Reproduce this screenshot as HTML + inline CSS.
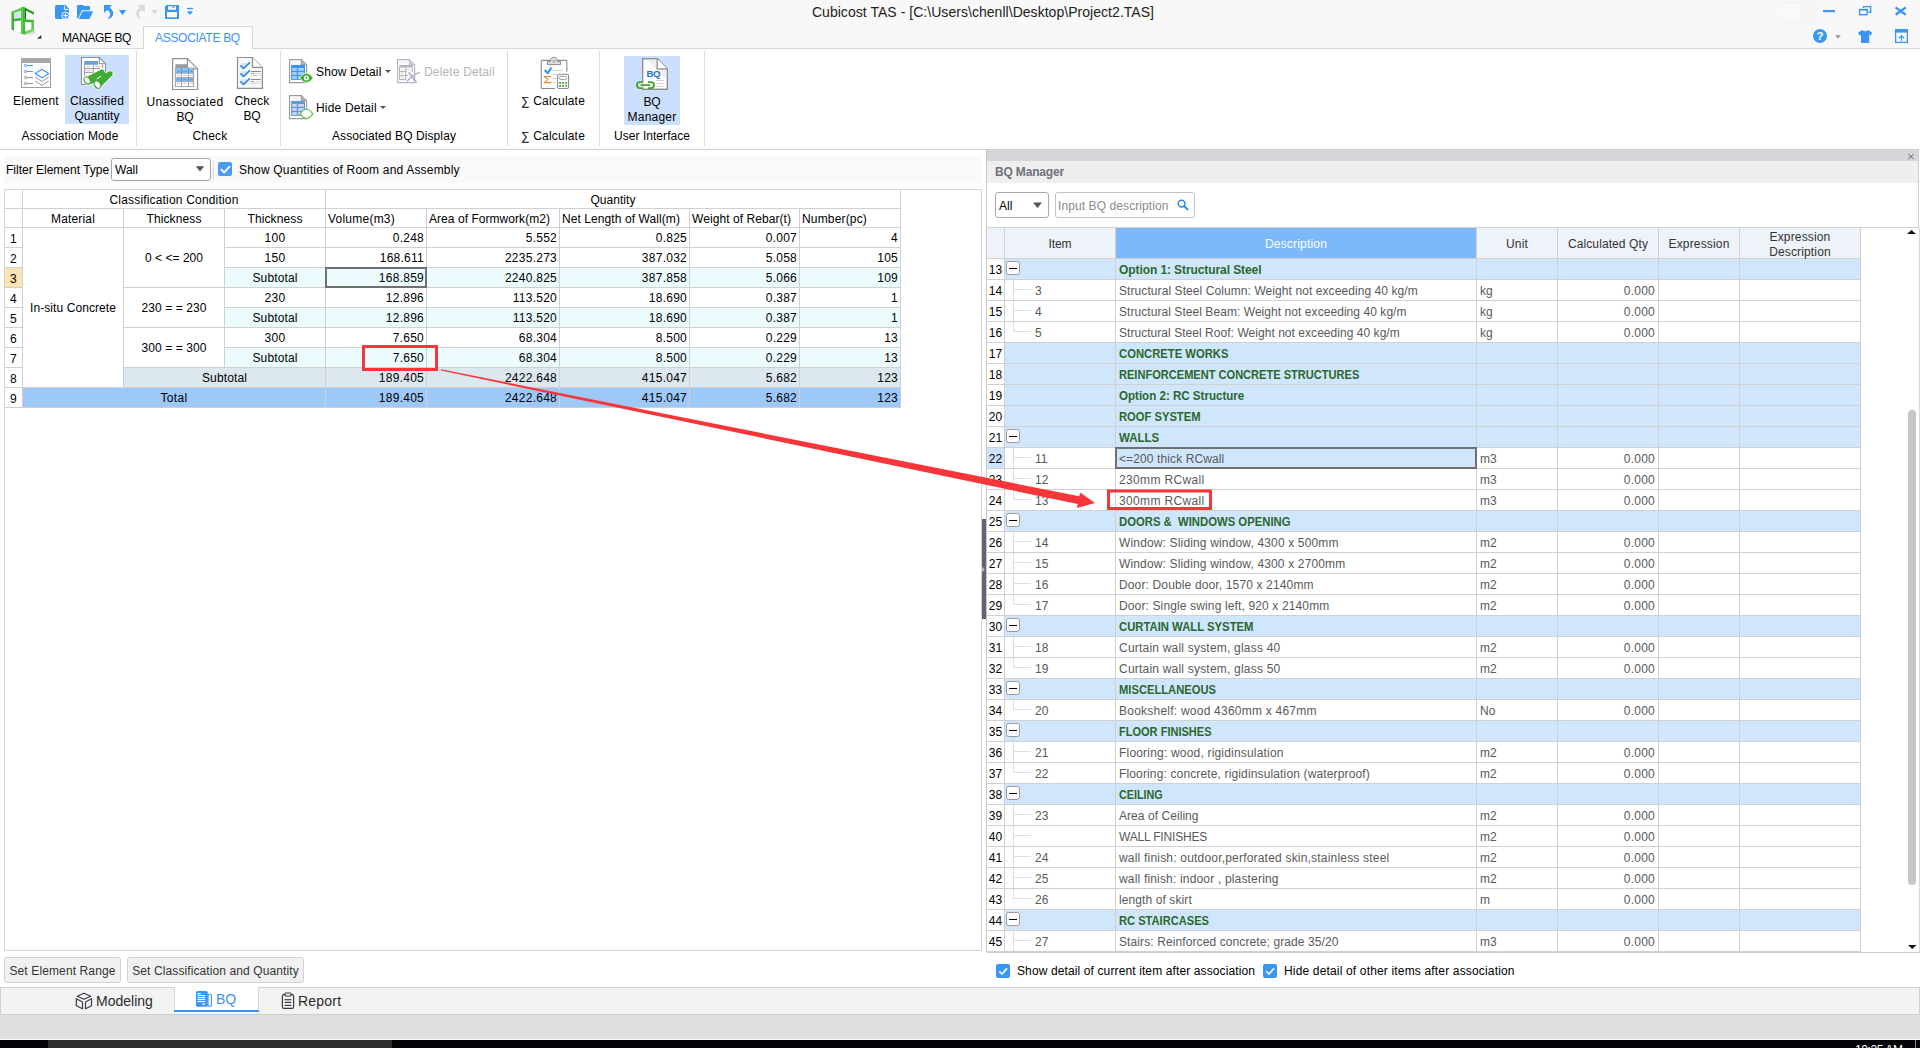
<!DOCTYPE html>
<html lang="en"><head><meta charset="utf-8"><title>Cubicost TAS</title>
<style>
*{box-sizing:border-box}
html,body{margin:0;padding:0}
body{width:1920px;height:1048px;overflow:hidden;position:relative;background:#fff;
 font-family:"Liberation Sans",sans-serif;font-size:12px;color:#000;line-height:14px}
.a{position:absolute}
.t{position:absolute;white-space:nowrap}
.c{position:absolute;white-space:nowrap;text-align:center}
.r{position:absolute;white-space:nowrap;text-align:right}
.hl{position:absolute;height:1px;background:#d0d0d0}
.vl{position:absolute;width:1px;background:#d0d0d0}
.sep{position:absolute;width:1px;top:51px;height:95px;background:#dcdcdc}
.gl{position:absolute;top:129px;height:14px;text-align:center;white-space:nowrap}
.g{color:#595959}
.grp{color:#2b682c;font-weight:bold}
svg{position:absolute;overflow:visible}
</style></head>
<body>
<!-- sec_top -->
<div class="a" style="left:0;top:0;width:1920px;height:49px;background:#f8f8f8"></div>
<div class="a" style="left:1781px;top:1px;width:36px;height:24px;background:#f5f5f5"></div><div class="a" style="left:1781px;top:4px;width:18px;height:18px;background:#f9f9f9"></div>
<div class="hl" style="left:0;top:48px;width:1920px;background:#d9d9d9"></div>
<div class="c" id="title" style="left:683px;top:3px;width:600px;font-size:14px;line-height:18px;color:#222;letter-spacing:0.04px">Cubicost TAS - [C:\Users\chenll\Desktop\Project2.TAS]</div>
<div class="t" id="tab1" style="left:62px;top:31px;letter-spacing:-0.42px">MANAGE BQ</div>
<div class="a" style="left:143px;top:26px;width:110px;height:23px;background:#fff;border:1px solid #d9d9d9;border-bottom:none"></div>
<div class="t" id="tab2" style="left:155px;top:31px;color:#3a94f6;letter-spacing:-0.3px">ASSOCIATE BQ</div>
<!-- sec_ribbon -->
<div class="hl" style="left:0;top:149px;width:1920px;background:#cfcfcf"></div>
<div class="sep" style="left:136px"></div>
<div class="sep" style="left:280px"></div>
<div class="sep" style="left:507px"></div>
<div class="sep" style="left:599px"></div>
<div class="sep" style="left:704px"></div>
<div class="a" style="left:65px;top:55px;width:64px;height:69px;background:#cce0fd"></div>
<div class="a" style="left:624px;top:56px;width:56px;height:69px;background:#cce0fd"></div>
<div class="c" style="left:-24px;top:94px;width:120px;line-height:15px"><span style="letter-spacing:0.28px">Element</span></div>
<div class="c" style="left:37px;top:94px;width:120px;line-height:15px"><span style="letter-spacing:0.198px">Classified</span><br><span style="letter-spacing:0.039px">Quantity</span></div>
<div class="c" style="left:125px;top:95px;width:120px;line-height:15px"><span style="letter-spacing:0.36px">Unassociated</span><br><span style="letter-spacing:-0.169px">BQ</span></div>
<div class="c" style="left:192px;top:94px;width:120px;line-height:15px"><span style="letter-spacing:0.197px">Check</span><br><span style="letter-spacing:-0.169px">BQ</span></div>
<div class="c" style="left:493px;top:94px;width:120px;line-height:15px"><span style="letter-spacing:0.189px">∑ Calculate</span></div>
<div class="c" style="left:592px;top:95px;width:120px;line-height:15px"><span style="letter-spacing:-0.169px">BQ</span><br><span style="letter-spacing:0.234px">Manager</span></div>
<div class="t" style="left:316px;top:65px;letter-spacing:0.127px">Show Detail</div>
<div class="t" style="left:316px;top:101px;letter-spacing:0.191px">Hide Detail</div>
<div class="t" style="left:424px;top:65px;color:#b4b4b4;letter-spacing:0.158px">Delete Detail</div>
<div class="a" style="left:384.5px;top:70px;border:3px solid transparent;border-top:3.5px solid #555;border-bottom:none"></div>
<div class="a" style="left:379.5px;top:106px;border:3px solid transparent;border-top:3.5px solid #555;border-bottom:none"></div>
<div class="gl" style="left:-30px;width:200px;letter-spacing:0.143px">Association Mode</div>
<div class="gl" style="left:110px;width:200px;letter-spacing:0.197px">Check</div>
<div class="gl" style="left:294px;width:200px;letter-spacing:0.093px">Associated BQ Display</div>
<div class="gl" style="left:453px;width:200px;letter-spacing:0.189px">∑ Calculate</div>
<div class="gl" style="left:552px;width:200px;letter-spacing:0.045px">User Interface</div>
<!-- sec_left -->
<div class="a" style="left:4px;top:156px;width:978px;height:27px;background:#f9f9f9"></div>
<div class="t" style="left:6px;top:163px">Filter Element Type</div>
<div class="a" style="left:111px;top:158px;width:100px;height:23px;background:#fff;border:1px solid #a6a6a6;border-radius:3px"></div>
<div class="t" style="left:115px;top:163px">Wall</div>
<div class="vl" style="left:213px;top:161px;height:18px;background:#dcdcdc"></div>
<div class="a" style="left:218px;top:162px;width:14px;height:14px;background:#4a9bf7;border-radius:2px"></div>
<svg style="left:218px;top:162px" width="14" height="14" viewBox="0 0 14 14"><path d="M2.8 7.1 L6.2 10.4 L12 4.2" fill="none" stroke="#fff" stroke-width="1.9"/></svg>
<div class="t" style="left:239px;top:163px;letter-spacing:0.183px">Show Quantities of Room and Assembly</div>
<div class="a" style="left:4px;top:189px;width:978px;height:762px;border:1px solid #d4d4d4"></div>
<div class="a" style="left:5px;top:190px;width:18px;height:19px;border-right:1px solid #d0d0d0;border-bottom:1px solid #d0d0d0;text-align:center;line-height:20px;white-space:nowrap;"></div>
<div class="a" style="left:23px;top:190px;width:303px;height:19px;border-right:1px solid #d0d0d0;border-bottom:1px solid #d0d0d0;text-align:center;line-height:20px;white-space:nowrap;letter-spacing:0.178px;">Classification Condition</div>
<div class="a" style="left:326px;top:190px;width:575px;height:19px;border-right:1px solid #d0d0d0;border-bottom:1px solid #d0d0d0;text-align:center;line-height:20px;white-space:nowrap;letter-spacing:0.039px;">Quantity</div>
<div class="a" style="left:5px;top:209px;width:18px;height:19px;border-right:1px solid #d0d0d0;border-bottom:1px solid #d0d0d0;text-align:center;line-height:20px;white-space:nowrap;"></div>
<div class="a" style="left:23px;top:209px;width:101px;height:19px;border-right:1px solid #d0d0d0;border-bottom:1px solid #d0d0d0;text-align:center;line-height:20px;white-space:nowrap;letter-spacing:0.165px;">Material</div>
<div class="a" style="left:124px;top:209px;width:101px;height:19px;border-right:1px solid #d0d0d0;border-bottom:1px solid #d0d0d0;text-align:center;line-height:20px;white-space:nowrap;letter-spacing:0.109px;">Thickness</div>
<div class="a" style="left:225px;top:209px;width:101px;height:19px;border-right:1px solid #d0d0d0;border-bottom:1px solid #d0d0d0;text-align:center;line-height:20px;white-space:nowrap;letter-spacing:0.109px;">Thickness</div>
<div class="a" style="left:326px;top:209px;width:101px;height:19px;border-right:1px solid #d0d0d0;border-bottom:1px solid #d0d0d0;text-align:left;padding-left:2px;line-height:20px;white-space:nowrap;letter-spacing:0.231px;">Volume(m3)</div>
<div class="a" style="left:427px;top:209px;width:133px;height:19px;border-right:1px solid #d0d0d0;border-bottom:1px solid #d0d0d0;text-align:left;padding-left:2px;line-height:20px;white-space:nowrap;letter-spacing:0.049px;">Area of Formwork(m2)</div>
<div class="a" style="left:560px;top:209px;width:130px;height:19px;border-right:1px solid #d0d0d0;border-bottom:1px solid #d0d0d0;text-align:left;padding-left:2px;line-height:20px;white-space:nowrap;letter-spacing:0.083px;">Net Length of Wall(m)</div>
<div class="a" style="left:690px;top:209px;width:110px;height:19px;border-right:1px solid #d0d0d0;border-bottom:1px solid #d0d0d0;text-align:left;padding-left:2px;line-height:20px;white-space:nowrap;letter-spacing:0.066px;">Weight of Rebar(t)</div>
<div class="a" style="left:800px;top:209px;width:101px;height:19px;border-right:1px solid #d0d0d0;border-bottom:1px solid #d0d0d0;text-align:left;padding-left:2px;line-height:20px;white-space:nowrap;letter-spacing:0.165px;">Number(pc)</div>
<div class="a" style="left:5px;top:228px;width:18px;height:20px;border-right:1px solid #d0d0d0;border-bottom:1px solid #d0d0d0;text-align:center;line-height:23px;white-space:nowrap;letter-spacing:0.326px;">1</div>
<div class="a" style="left:5px;top:248px;width:18px;height:20px;border-right:1px solid #d0d0d0;border-bottom:1px solid #d0d0d0;text-align:center;line-height:23px;white-space:nowrap;letter-spacing:0.326px;">2</div>
<div class="a" style="left:5px;top:268px;width:18px;height:20px;border-right:1px solid #d0d0d0;border-bottom:1px solid #d0d0d0;background:#fde3b3;text-align:center;line-height:23px;white-space:nowrap;letter-spacing:0.326px;">3</div>
<div class="a" style="left:5px;top:288px;width:18px;height:20px;border-right:1px solid #d0d0d0;border-bottom:1px solid #d0d0d0;text-align:center;line-height:23px;white-space:nowrap;letter-spacing:0.326px;">4</div>
<div class="a" style="left:5px;top:308px;width:18px;height:20px;border-right:1px solid #d0d0d0;border-bottom:1px solid #d0d0d0;text-align:center;line-height:23px;white-space:nowrap;letter-spacing:0.326px;">5</div>
<div class="a" style="left:5px;top:328px;width:18px;height:20px;border-right:1px solid #d0d0d0;border-bottom:1px solid #d0d0d0;text-align:center;line-height:23px;white-space:nowrap;letter-spacing:0.326px;">6</div>
<div class="a" style="left:5px;top:348px;width:18px;height:20px;border-right:1px solid #d0d0d0;border-bottom:1px solid #d0d0d0;text-align:center;line-height:23px;white-space:nowrap;letter-spacing:0.326px;">7</div>
<div class="a" style="left:5px;top:368px;width:18px;height:20px;border-right:1px solid #d0d0d0;border-bottom:1px solid #d0d0d0;text-align:center;line-height:23px;white-space:nowrap;letter-spacing:0.326px;">8</div>
<div class="a" style="left:5px;top:388px;width:18px;height:20px;border-right:1px solid #d0d0d0;border-bottom:1px solid #d0d0d0;text-align:center;line-height:23px;white-space:nowrap;letter-spacing:0.326px;">9</div>
<div class="a" style="left:23px;top:228px;width:101px;height:160px;border-right:1px solid #d0d0d0;border-bottom:1px solid #d0d0d0;text-align:center;line-height:161px;white-space:nowrap;letter-spacing:0.08px;">In-situ Concrete</div>
<div class="a" style="left:124px;top:228px;width:101px;height:60px;border-right:1px solid #d0d0d0;border-bottom:1px solid #d0d0d0;text-align:center;line-height:61px;white-space:nowrap;letter-spacing:0.028px;">0 &lt; &lt;= 200</div>
<div class="a" style="left:124px;top:288px;width:101px;height:40px;border-right:1px solid #d0d0d0;border-bottom:1px solid #d0d0d0;text-align:center;line-height:41px;white-space:nowrap;letter-spacing:0.085px;">230 = = 230</div>
<div class="a" style="left:124px;top:328px;width:101px;height:40px;border-right:1px solid #d0d0d0;border-bottom:1px solid #d0d0d0;text-align:center;line-height:41px;white-space:nowrap;letter-spacing:0.085px;">300 = = 300</div>
<div class="a" style="left:225px;top:228px;width:101px;height:20px;border-right:1px solid #d0d0d0;border-bottom:1px solid #d0d0d0;text-align:center;line-height:21px;white-space:nowrap;letter-spacing:0.326px;">100</div>
<div class="a" style="left:326px;top:228px;width:101px;height:20px;border-right:1px solid #d0d0d0;border-bottom:1px solid #d0d0d0;text-align:right;padding-right:2px;line-height:21px;white-space:nowrap;letter-spacing:0.25px;">0.248</div>
<div class="a" style="left:427px;top:228px;width:133px;height:20px;border-right:1px solid #d0d0d0;border-bottom:1px solid #d0d0d0;text-align:right;padding-right:2px;line-height:21px;white-space:nowrap;letter-spacing:0.25px;">5.552</div>
<div class="a" style="left:560px;top:228px;width:130px;height:20px;border-right:1px solid #d0d0d0;border-bottom:1px solid #d0d0d0;text-align:right;padding-right:2px;line-height:21px;white-space:nowrap;letter-spacing:0.25px;">0.825</div>
<div class="a" style="left:690px;top:228px;width:110px;height:20px;border-right:1px solid #d0d0d0;border-bottom:1px solid #d0d0d0;text-align:right;padding-right:2px;line-height:21px;white-space:nowrap;letter-spacing:0.25px;">0.007</div>
<div class="a" style="left:800px;top:228px;width:101px;height:20px;border-right:1px solid #d0d0d0;border-bottom:1px solid #d0d0d0;text-align:right;padding-right:2px;line-height:21px;white-space:nowrap;letter-spacing:0.25px;">4</div>
<div class="a" style="left:225px;top:248px;width:101px;height:20px;border-right:1px solid #d0d0d0;border-bottom:1px solid #d0d0d0;text-align:center;line-height:21px;white-space:nowrap;letter-spacing:0.326px;">150</div>
<div class="a" style="left:326px;top:248px;width:101px;height:20px;border-right:1px solid #d0d0d0;border-bottom:1px solid #d0d0d0;text-align:right;padding-right:2px;line-height:21px;white-space:nowrap;letter-spacing:0.25px;">168.611</div>
<div class="a" style="left:427px;top:248px;width:133px;height:20px;border-right:1px solid #d0d0d0;border-bottom:1px solid #d0d0d0;text-align:right;padding-right:2px;line-height:21px;white-space:nowrap;letter-spacing:0.25px;">2235.273</div>
<div class="a" style="left:560px;top:248px;width:130px;height:20px;border-right:1px solid #d0d0d0;border-bottom:1px solid #d0d0d0;text-align:right;padding-right:2px;line-height:21px;white-space:nowrap;letter-spacing:0.25px;">387.032</div>
<div class="a" style="left:690px;top:248px;width:110px;height:20px;border-right:1px solid #d0d0d0;border-bottom:1px solid #d0d0d0;text-align:right;padding-right:2px;line-height:21px;white-space:nowrap;letter-spacing:0.25px;">5.058</div>
<div class="a" style="left:800px;top:248px;width:101px;height:20px;border-right:1px solid #d0d0d0;border-bottom:1px solid #d0d0d0;text-align:right;padding-right:2px;line-height:21px;white-space:nowrap;letter-spacing:0.25px;">105</div>
<div class="a" style="left:225px;top:268px;width:101px;height:20px;border-right:1px solid #d0d0d0;border-bottom:1px solid #d0d0d0;background:#ecfcfe;text-align:center;line-height:21px;white-space:nowrap;letter-spacing:0.121px;">Subtotal</div>
<div class="a" style="left:326px;top:268px;width:101px;height:20px;border-right:1px solid #d0d0d0;border-bottom:1px solid #d0d0d0;background:#ecfcfe;text-align:right;padding-right:2px;line-height:21px;white-space:nowrap;letter-spacing:0.25px;">168.859</div>
<div class="a" style="left:427px;top:268px;width:133px;height:20px;border-right:1px solid #d0d0d0;border-bottom:1px solid #d0d0d0;background:#ecfcfe;text-align:right;padding-right:2px;line-height:21px;white-space:nowrap;letter-spacing:0.25px;">2240.825</div>
<div class="a" style="left:560px;top:268px;width:130px;height:20px;border-right:1px solid #d0d0d0;border-bottom:1px solid #d0d0d0;background:#ecfcfe;text-align:right;padding-right:2px;line-height:21px;white-space:nowrap;letter-spacing:0.25px;">387.858</div>
<div class="a" style="left:690px;top:268px;width:110px;height:20px;border-right:1px solid #d0d0d0;border-bottom:1px solid #d0d0d0;background:#ecfcfe;text-align:right;padding-right:2px;line-height:21px;white-space:nowrap;letter-spacing:0.25px;">5.066</div>
<div class="a" style="left:800px;top:268px;width:101px;height:20px;border-right:1px solid #d0d0d0;border-bottom:1px solid #d0d0d0;background:#ecfcfe;text-align:right;padding-right:2px;line-height:21px;white-space:nowrap;letter-spacing:0.25px;">109</div>
<div class="a" style="left:225px;top:288px;width:101px;height:20px;border-right:1px solid #d0d0d0;border-bottom:1px solid #d0d0d0;text-align:center;line-height:21px;white-space:nowrap;letter-spacing:0.326px;">230</div>
<div class="a" style="left:326px;top:288px;width:101px;height:20px;border-right:1px solid #d0d0d0;border-bottom:1px solid #d0d0d0;text-align:right;padding-right:2px;line-height:21px;white-space:nowrap;letter-spacing:0.25px;">12.896</div>
<div class="a" style="left:427px;top:288px;width:133px;height:20px;border-right:1px solid #d0d0d0;border-bottom:1px solid #d0d0d0;text-align:right;padding-right:2px;line-height:21px;white-space:nowrap;letter-spacing:0.25px;">113.520</div>
<div class="a" style="left:560px;top:288px;width:130px;height:20px;border-right:1px solid #d0d0d0;border-bottom:1px solid #d0d0d0;text-align:right;padding-right:2px;line-height:21px;white-space:nowrap;letter-spacing:0.25px;">18.690</div>
<div class="a" style="left:690px;top:288px;width:110px;height:20px;border-right:1px solid #d0d0d0;border-bottom:1px solid #d0d0d0;text-align:right;padding-right:2px;line-height:21px;white-space:nowrap;letter-spacing:0.25px;">0.387</div>
<div class="a" style="left:800px;top:288px;width:101px;height:20px;border-right:1px solid #d0d0d0;border-bottom:1px solid #d0d0d0;text-align:right;padding-right:2px;line-height:21px;white-space:nowrap;letter-spacing:0.25px;">1</div>
<div class="a" style="left:225px;top:308px;width:101px;height:20px;border-right:1px solid #d0d0d0;border-bottom:1px solid #d0d0d0;background:#ecfcfe;text-align:center;line-height:21px;white-space:nowrap;letter-spacing:0.121px;">Subtotal</div>
<div class="a" style="left:326px;top:308px;width:101px;height:20px;border-right:1px solid #d0d0d0;border-bottom:1px solid #d0d0d0;background:#ecfcfe;text-align:right;padding-right:2px;line-height:21px;white-space:nowrap;letter-spacing:0.25px;">12.896</div>
<div class="a" style="left:427px;top:308px;width:133px;height:20px;border-right:1px solid #d0d0d0;border-bottom:1px solid #d0d0d0;background:#ecfcfe;text-align:right;padding-right:2px;line-height:21px;white-space:nowrap;letter-spacing:0.25px;">113.520</div>
<div class="a" style="left:560px;top:308px;width:130px;height:20px;border-right:1px solid #d0d0d0;border-bottom:1px solid #d0d0d0;background:#ecfcfe;text-align:right;padding-right:2px;line-height:21px;white-space:nowrap;letter-spacing:0.25px;">18.690</div>
<div class="a" style="left:690px;top:308px;width:110px;height:20px;border-right:1px solid #d0d0d0;border-bottom:1px solid #d0d0d0;background:#ecfcfe;text-align:right;padding-right:2px;line-height:21px;white-space:nowrap;letter-spacing:0.25px;">0.387</div>
<div class="a" style="left:800px;top:308px;width:101px;height:20px;border-right:1px solid #d0d0d0;border-bottom:1px solid #d0d0d0;background:#ecfcfe;text-align:right;padding-right:2px;line-height:21px;white-space:nowrap;letter-spacing:0.25px;">1</div>
<div class="a" style="left:225px;top:328px;width:101px;height:20px;border-right:1px solid #d0d0d0;border-bottom:1px solid #d0d0d0;text-align:center;line-height:21px;white-space:nowrap;letter-spacing:0.326px;">300</div>
<div class="a" style="left:326px;top:328px;width:101px;height:20px;border-right:1px solid #d0d0d0;border-bottom:1px solid #d0d0d0;text-align:right;padding-right:2px;line-height:21px;white-space:nowrap;letter-spacing:0.25px;">7.650</div>
<div class="a" style="left:427px;top:328px;width:133px;height:20px;border-right:1px solid #d0d0d0;border-bottom:1px solid #d0d0d0;text-align:right;padding-right:2px;line-height:21px;white-space:nowrap;letter-spacing:0.25px;">68.304</div>
<div class="a" style="left:560px;top:328px;width:130px;height:20px;border-right:1px solid #d0d0d0;border-bottom:1px solid #d0d0d0;text-align:right;padding-right:2px;line-height:21px;white-space:nowrap;letter-spacing:0.25px;">8.500</div>
<div class="a" style="left:690px;top:328px;width:110px;height:20px;border-right:1px solid #d0d0d0;border-bottom:1px solid #d0d0d0;text-align:right;padding-right:2px;line-height:21px;white-space:nowrap;letter-spacing:0.25px;">0.229</div>
<div class="a" style="left:800px;top:328px;width:101px;height:20px;border-right:1px solid #d0d0d0;border-bottom:1px solid #d0d0d0;text-align:right;padding-right:2px;line-height:21px;white-space:nowrap;letter-spacing:0.25px;">13</div>
<div class="a" style="left:225px;top:348px;width:101px;height:20px;border-right:1px solid #d0d0d0;border-bottom:1px solid #d0d0d0;background:#ecfcfe;text-align:center;line-height:21px;white-space:nowrap;letter-spacing:0.121px;">Subtotal</div>
<div class="a" style="left:326px;top:348px;width:101px;height:20px;border-right:1px solid #d0d0d0;border-bottom:1px solid #d0d0d0;background:#ecfcfe;text-align:right;padding-right:2px;line-height:21px;white-space:nowrap;letter-spacing:0.25px;">7.650</div>
<div class="a" style="left:427px;top:348px;width:133px;height:20px;border-right:1px solid #d0d0d0;border-bottom:1px solid #d0d0d0;background:#ecfcfe;text-align:right;padding-right:2px;line-height:21px;white-space:nowrap;letter-spacing:0.25px;">68.304</div>
<div class="a" style="left:560px;top:348px;width:130px;height:20px;border-right:1px solid #d0d0d0;border-bottom:1px solid #d0d0d0;background:#ecfcfe;text-align:right;padding-right:2px;line-height:21px;white-space:nowrap;letter-spacing:0.25px;">8.500</div>
<div class="a" style="left:690px;top:348px;width:110px;height:20px;border-right:1px solid #d0d0d0;border-bottom:1px solid #d0d0d0;background:#ecfcfe;text-align:right;padding-right:2px;line-height:21px;white-space:nowrap;letter-spacing:0.25px;">0.229</div>
<div class="a" style="left:800px;top:348px;width:101px;height:20px;border-right:1px solid #d0d0d0;border-bottom:1px solid #d0d0d0;background:#ecfcfe;text-align:right;padding-right:2px;line-height:21px;white-space:nowrap;letter-spacing:0.25px;">13</div>
<div class="a" style="left:124px;top:368px;width:202px;height:20px;border-right:1px solid #d0d0d0;border-bottom:1px solid #d0d0d0;background:#dde8ee;text-align:center;line-height:21px;white-space:nowrap;letter-spacing:0.121px;">Subtotal</div>
<div class="a" style="left:326px;top:368px;width:101px;height:20px;border-right:1px solid #d0d0d0;border-bottom:1px solid #d0d0d0;background:#dde8ee;text-align:right;padding-right:2px;line-height:21px;white-space:nowrap;letter-spacing:0.25px;">189.405</div>
<div class="a" style="left:427px;top:368px;width:133px;height:20px;border-right:1px solid #d0d0d0;border-bottom:1px solid #d0d0d0;background:#dde8ee;text-align:right;padding-right:2px;line-height:21px;white-space:nowrap;letter-spacing:0.25px;">2422.648</div>
<div class="a" style="left:560px;top:368px;width:130px;height:20px;border-right:1px solid #d0d0d0;border-bottom:1px solid #d0d0d0;background:#dde8ee;text-align:right;padding-right:2px;line-height:21px;white-space:nowrap;letter-spacing:0.25px;">415.047</div>
<div class="a" style="left:690px;top:368px;width:110px;height:20px;border-right:1px solid #d0d0d0;border-bottom:1px solid #d0d0d0;background:#dde8ee;text-align:right;padding-right:2px;line-height:21px;white-space:nowrap;letter-spacing:0.25px;">5.682</div>
<div class="a" style="left:800px;top:368px;width:101px;height:20px;border-right:1px solid #d0d0d0;border-bottom:1px solid #d0d0d0;background:#dde8ee;text-align:right;padding-right:2px;line-height:21px;white-space:nowrap;letter-spacing:0.25px;">123</div>
<div class="a" style="left:23px;top:388px;width:303px;height:20px;border-right:1px solid #d0d0d0;border-bottom:1px solid #d0d0d0;background:#9dc8f8;text-align:center;line-height:21px;white-space:nowrap;letter-spacing:0.33px;">Total</div>
<div class="a" style="left:326px;top:388px;width:101px;height:20px;border-right:1px solid #d0d0d0;border-bottom:1px solid #d0d0d0;background:#9dc8f8;text-align:right;padding-right:2px;line-height:21px;white-space:nowrap;letter-spacing:0.25px;">189.405</div>
<div class="a" style="left:427px;top:388px;width:133px;height:20px;border-right:1px solid #d0d0d0;border-bottom:1px solid #d0d0d0;background:#9dc8f8;text-align:right;padding-right:2px;line-height:21px;white-space:nowrap;letter-spacing:0.25px;">2422.648</div>
<div class="a" style="left:560px;top:388px;width:130px;height:20px;border-right:1px solid #d0d0d0;border-bottom:1px solid #d0d0d0;background:#9dc8f8;text-align:right;padding-right:2px;line-height:21px;white-space:nowrap;letter-spacing:0.25px;">415.047</div>
<div class="a" style="left:690px;top:388px;width:110px;height:20px;border-right:1px solid #d0d0d0;border-bottom:1px solid #d0d0d0;background:#9dc8f8;text-align:right;padding-right:2px;line-height:21px;white-space:nowrap;letter-spacing:0.25px;">5.682</div>
<div class="a" style="left:800px;top:388px;width:101px;height:20px;border-right:1px solid #d0d0d0;border-bottom:1px solid #d0d0d0;background:#9dc8f8;text-align:right;padding-right:2px;line-height:21px;white-space:nowrap;letter-spacing:0.25px;">123</div>
<div class="a" style="left:325px;top:267px;width:102px;height:21px;border:2px solid #707070"></div>
<div class="c" style="left:4px;top:957px;width:117px;height:26px;line-height:26px;letter-spacing:0.12px;background:#f1f1f1;border:1px solid #d2d2d2;border-radius:3px;color:#333">Set Element Range</div>
<div class="c" style="left:127px;top:957px;width:177px;height:26px;line-height:26px;letter-spacing:0.1px;background:#f1f1f1;border:1px solid #d2d2d2;border-radius:3px;color:#333">Set Classification and Quantity</div>
<!-- sec_right -->
<div class="vl" style="left:986px;top:150px;height:802px;background:#c9c9c9"></div>
<div class="vl" style="left:1918px;top:150px;height:78px;background:#d0d0d0"></div>
<div class="a" style="left:987px;top:150px;width:931px;height:11px;background:#d5d5db"></div>
<div class="a" style="left:987px;top:161px;width:931px;height:22px;background:#efefef"></div>
<div class="t" style="left:995px;top:165px;font-weight:bold;color:#70707a;letter-spacing:-0.17px">BQ Manager</div>
<svg style="left:1908px;top:154px" width="6" height="5" viewBox="0 0 6 5"><path d="M0.3 0 L5.7 5 M5.7 0 L0.3 5" stroke="#666" stroke-width="1" fill="none"/></svg>
<div class="a" style="left:982px;top:519px;width:4px;height:100px;background:#626277"></div>
<div class="a" style="left:995px;top:192px;width:54px;height:26px;background:#fff;border:1px solid #a9a9a9;border-radius:3px"></div>
<div class="t" style="left:999px;top:199px">All</div>
<div class="a" style="left:1055px;top:192px;width:140px;height:26px;background:#fff;border:1px solid #c4c4c4;border-radius:3px"></div>
<div class="t" style="left:1058px;top:199px;color:#8a8a8a;letter-spacing:0.093px">Input BQ description</div>
<svg style="left:1177px;top:199px" width="12" height="12" viewBox="0 0 12 12"><circle cx="4.6" cy="4.6" r="3.4" fill="none" stroke="#2f86e0" stroke-width="1.5"/><path d="M7.2 7.2 L10.6 10.4" stroke="#2f86e0" stroke-width="1.9" stroke-linecap="round"/></svg>
<div class="hl" style="left:987px;top:227px;width:931px"></div>
<div class="a" style="left:987px;top:228px;width:18px;height:31px;border-right:1px solid #d0d0d0;border-bottom:1px solid #d0d0d0;background:#eef2f9;"></div>
<div class="a" style="left:1005px;top:228px;width:111px;height:31px;border-right:1px solid #d0d0d0;border-bottom:1px solid #d0d0d0;background:#eef2f9;"></div>
<div class="c" style="left:1005px;top:237px;width:110px;color:#333;line-height:15px;letter-spacing:-0.084px">Item</div>
<div class="a" style="left:1116px;top:228px;width:361px;height:31px;border-right:1px solid #d0d0d0;border-bottom:1px solid #d0d0d0;background:#7db9f8;"></div>
<div class="c" style="left:1116px;top:237px;width:360px;color:#fff;line-height:15px;letter-spacing:0.18px">Description</div>
<div class="a" style="left:1477px;top:228px;width:81px;height:31px;border-right:1px solid #d0d0d0;border-bottom:1px solid #d0d0d0;background:#eef2f9;"></div>
<div class="c" style="left:1477px;top:237px;width:80px;color:#333;line-height:15px;letter-spacing:0.165px">Unit</div>
<div class="a" style="left:1558px;top:228px;width:101px;height:31px;border-right:1px solid #d0d0d0;border-bottom:1px solid #d0d0d0;background:#eef2f9;"></div>
<div class="c" style="left:1558px;top:237px;width:100px;color:#333;line-height:15px;letter-spacing:0.093px">Calculated Qty</div>
<div class="a" style="left:1659px;top:228px;width:81px;height:31px;border-right:1px solid #d0d0d0;border-bottom:1px solid #d0d0d0;background:#eef2f9;"></div>
<div class="c" style="left:1659px;top:237px;width:80px;color:#333;line-height:15px;letter-spacing:0.164px">Expression</div>
<div class="a" style="left:1740px;top:228px;width:121px;height:31px;border-right:1px solid #d0d0d0;border-bottom:1px solid #d0d0d0;background:#eef2f9;"></div>
<div class="c" style="left:1740px;top:230px;width:120px;color:#333;line-height:15px;letter-spacing:0.149px">Expression<br>Description</div>
<div class="a" style="left:987px;top:259px;width:18px;height:21px;border-right:1px solid #d0d0d0;border-bottom:1px solid #d0d0d0;"></div>
<div class="c" style="left:987px;top:263px;width:17px">13</div>
<div class="a" style="left:1005px;top:259px;width:111px;height:21px;border-right:1px solid #d0d0d0;border-bottom:1px solid #d0d0d0;background:#d0e6fd;"></div>
<div class="a" style="left:1116px;top:259px;width:361px;height:21px;border-right:1px solid #d0d0d0;border-bottom:1px solid #d0d0d0;background:#d0e6fd;"></div>
<div class="a" style="left:1477px;top:259px;width:81px;height:21px;border-right:1px solid #d0d0d0;border-bottom:1px solid #d0d0d0;background:#d0e6fd;"></div>
<div class="a" style="left:1558px;top:259px;width:101px;height:21px;border-right:1px solid #d0d0d0;border-bottom:1px solid #d0d0d0;background:#d0e6fd;"></div>
<div class="a" style="left:1659px;top:259px;width:81px;height:21px;border-right:1px solid #d0d0d0;border-bottom:1px solid #d0d0d0;background:#d0e6fd;"></div>
<div class="a" style="left:1740px;top:259px;width:121px;height:21px;border-right:1px solid #d0d0d0;border-bottom:1px solid #d0d0d0;background:#d0e6fd;"></div>
<div class="t grp" style="left:1119px;top:263px;letter-spacing:-0.087px;white-space:pre">Option 1: Structural Steel</div>
<div class="a" style="left:1006px;top:261px;width:14px;height:14px;background:#fff;border:1px solid #9a9a9a;border-radius:2.5px"></div>
<div class="a" style="left:1009px;top:268px;width:8px;height:1px;background:#000"></div>
<div class="vl" style="left:1013px;top:275px;height:4px;background:#dedede"></div>
<div class="a" style="left:987px;top:280px;width:18px;height:21px;border-right:1px solid #d0d0d0;border-bottom:1px solid #d0d0d0;"></div>
<div class="c" style="left:987px;top:284px;width:17px">14</div>
<div class="a" style="left:1005px;top:280px;width:111px;height:21px;border-right:1px solid #d0d0d0;border-bottom:1px solid #d0d0d0;"></div>
<div class="a" style="left:1116px;top:280px;width:361px;height:21px;border-right:1px solid #d0d0d0;border-bottom:1px solid #d0d0d0;"></div>
<div class="a" style="left:1477px;top:280px;width:81px;height:21px;border-right:1px solid #d0d0d0;border-bottom:1px solid #d0d0d0;"></div>
<div class="a" style="left:1558px;top:280px;width:101px;height:21px;border-right:1px solid #d0d0d0;border-bottom:1px solid #d0d0d0;"></div>
<div class="a" style="left:1659px;top:280px;width:81px;height:21px;border-right:1px solid #d0d0d0;border-bottom:1px solid #d0d0d0;"></div>
<div class="a" style="left:1740px;top:280px;width:121px;height:21px;border-right:1px solid #d0d0d0;border-bottom:1px solid #d0d0d0;"></div>
<div class="t g" style="left:1119px;top:284px;letter-spacing:0.08px;white-space:pre">Structural Steel Column: Weight not exceeding 40 kg/m</div>
<div class="t g" style="left:1035px;top:284px">3</div>
<div class="t g" style="left:1480px;top:284px">kg</div>
<div class="r g" style="left:1558px;top:284px;width:97px;letter-spacing:0.25px">0.000</div>
<div class="vl" style="left:1013px;top:280px;height:20px;background:#dedede"></div>
<div class="hl" style="left:1013px;top:289px;width:18px;background:#dedede"></div>
<div class="a" style="left:987px;top:301px;width:18px;height:21px;border-right:1px solid #d0d0d0;border-bottom:1px solid #d0d0d0;"></div>
<div class="c" style="left:987px;top:305px;width:17px">15</div>
<div class="a" style="left:1005px;top:301px;width:111px;height:21px;border-right:1px solid #d0d0d0;border-bottom:1px solid #d0d0d0;"></div>
<div class="a" style="left:1116px;top:301px;width:361px;height:21px;border-right:1px solid #d0d0d0;border-bottom:1px solid #d0d0d0;"></div>
<div class="a" style="left:1477px;top:301px;width:81px;height:21px;border-right:1px solid #d0d0d0;border-bottom:1px solid #d0d0d0;"></div>
<div class="a" style="left:1558px;top:301px;width:101px;height:21px;border-right:1px solid #d0d0d0;border-bottom:1px solid #d0d0d0;"></div>
<div class="a" style="left:1659px;top:301px;width:81px;height:21px;border-right:1px solid #d0d0d0;border-bottom:1px solid #d0d0d0;"></div>
<div class="a" style="left:1740px;top:301px;width:121px;height:21px;border-right:1px solid #d0d0d0;border-bottom:1px solid #d0d0d0;"></div>
<div class="t g" style="left:1119px;top:305px;letter-spacing:0.058px;white-space:pre">Structural Steel Beam: Weight not exceeding 40 kg/m</div>
<div class="t g" style="left:1035px;top:305px">4</div>
<div class="t g" style="left:1480px;top:305px">kg</div>
<div class="r g" style="left:1558px;top:305px;width:97px;letter-spacing:0.25px">0.000</div>
<div class="vl" style="left:1013px;top:301px;height:20px;background:#dedede"></div>
<div class="hl" style="left:1013px;top:310px;width:18px;background:#dedede"></div>
<div class="a" style="left:987px;top:322px;width:18px;height:21px;border-right:1px solid #d0d0d0;border-bottom:1px solid #d0d0d0;"></div>
<div class="c" style="left:987px;top:326px;width:17px">16</div>
<div class="a" style="left:1005px;top:322px;width:111px;height:21px;border-right:1px solid #d0d0d0;border-bottom:1px solid #d0d0d0;"></div>
<div class="a" style="left:1116px;top:322px;width:361px;height:21px;border-right:1px solid #d0d0d0;border-bottom:1px solid #d0d0d0;"></div>
<div class="a" style="left:1477px;top:322px;width:81px;height:21px;border-right:1px solid #d0d0d0;border-bottom:1px solid #d0d0d0;"></div>
<div class="a" style="left:1558px;top:322px;width:101px;height:21px;border-right:1px solid #d0d0d0;border-bottom:1px solid #d0d0d0;"></div>
<div class="a" style="left:1659px;top:322px;width:81px;height:21px;border-right:1px solid #d0d0d0;border-bottom:1px solid #d0d0d0;"></div>
<div class="a" style="left:1740px;top:322px;width:121px;height:21px;border-right:1px solid #d0d0d0;border-bottom:1px solid #d0d0d0;"></div>
<div class="t g" style="left:1119px;top:326px;letter-spacing:0.043px;white-space:pre">Structural Steel Roof: Weight not exceeding 40 kg/m</div>
<div class="t g" style="left:1035px;top:326px">5</div>
<div class="t g" style="left:1480px;top:326px">kg</div>
<div class="r g" style="left:1558px;top:326px;width:97px;letter-spacing:0.25px">0.000</div>
<div class="vl" style="left:1013px;top:322px;height:10px;background:#dedede"></div>
<div class="hl" style="left:1013px;top:331px;width:18px;background:#dedede"></div>
<div class="a" style="left:987px;top:343px;width:18px;height:21px;border-right:1px solid #d0d0d0;border-bottom:1px solid #d0d0d0;"></div>
<div class="c" style="left:987px;top:347px;width:17px">17</div>
<div class="a" style="left:1005px;top:343px;width:111px;height:21px;border-right:1px solid #d0d0d0;border-bottom:1px solid #d0d0d0;background:#d0e6fd;"></div>
<div class="a" style="left:1116px;top:343px;width:361px;height:21px;border-right:1px solid #d0d0d0;border-bottom:1px solid #d0d0d0;background:#d0e6fd;"></div>
<div class="a" style="left:1477px;top:343px;width:81px;height:21px;border-right:1px solid #d0d0d0;border-bottom:1px solid #d0d0d0;background:#d0e6fd;"></div>
<div class="a" style="left:1558px;top:343px;width:101px;height:21px;border-right:1px solid #d0d0d0;border-bottom:1px solid #d0d0d0;background:#d0e6fd;"></div>
<div class="a" style="left:1659px;top:343px;width:81px;height:21px;border-right:1px solid #d0d0d0;border-bottom:1px solid #d0d0d0;background:#d0e6fd;"></div>
<div class="a" style="left:1740px;top:343px;width:121px;height:21px;border-right:1px solid #d0d0d0;border-bottom:1px solid #d0d0d0;background:#d0e6fd;"></div>
<div class="t grp" style="left:1119px;top:347px;white-space:pre;transform-origin:0 50%;transform:scaleX(0.9386)">CONCRETE WORKS</div>
<div class="a" style="left:987px;top:364px;width:18px;height:21px;border-right:1px solid #d0d0d0;border-bottom:1px solid #d0d0d0;"></div>
<div class="c" style="left:987px;top:368px;width:17px">18</div>
<div class="a" style="left:1005px;top:364px;width:111px;height:21px;border-right:1px solid #d0d0d0;border-bottom:1px solid #d0d0d0;background:#d0e6fd;"></div>
<div class="a" style="left:1116px;top:364px;width:361px;height:21px;border-right:1px solid #d0d0d0;border-bottom:1px solid #d0d0d0;background:#d0e6fd;"></div>
<div class="a" style="left:1477px;top:364px;width:81px;height:21px;border-right:1px solid #d0d0d0;border-bottom:1px solid #d0d0d0;background:#d0e6fd;"></div>
<div class="a" style="left:1558px;top:364px;width:101px;height:21px;border-right:1px solid #d0d0d0;border-bottom:1px solid #d0d0d0;background:#d0e6fd;"></div>
<div class="a" style="left:1659px;top:364px;width:81px;height:21px;border-right:1px solid #d0d0d0;border-bottom:1px solid #d0d0d0;background:#d0e6fd;"></div>
<div class="a" style="left:1740px;top:364px;width:121px;height:21px;border-right:1px solid #d0d0d0;border-bottom:1px solid #d0d0d0;background:#d0e6fd;"></div>
<div class="t grp" style="left:1119px;top:368px;white-space:pre;transform-origin:0 50%;transform:scaleX(0.9217)">REINFORCEMENT CONCRETE STRUCTURES</div>
<div class="a" style="left:987px;top:385px;width:18px;height:21px;border-right:1px solid #d0d0d0;border-bottom:1px solid #d0d0d0;"></div>
<div class="c" style="left:987px;top:389px;width:17px">19</div>
<div class="a" style="left:1005px;top:385px;width:111px;height:21px;border-right:1px solid #d0d0d0;border-bottom:1px solid #d0d0d0;background:#d0e6fd;"></div>
<div class="a" style="left:1116px;top:385px;width:361px;height:21px;border-right:1px solid #d0d0d0;border-bottom:1px solid #d0d0d0;background:#d0e6fd;"></div>
<div class="a" style="left:1477px;top:385px;width:81px;height:21px;border-right:1px solid #d0d0d0;border-bottom:1px solid #d0d0d0;background:#d0e6fd;"></div>
<div class="a" style="left:1558px;top:385px;width:101px;height:21px;border-right:1px solid #d0d0d0;border-bottom:1px solid #d0d0d0;background:#d0e6fd;"></div>
<div class="a" style="left:1659px;top:385px;width:81px;height:21px;border-right:1px solid #d0d0d0;border-bottom:1px solid #d0d0d0;background:#d0e6fd;"></div>
<div class="a" style="left:1740px;top:385px;width:121px;height:21px;border-right:1px solid #d0d0d0;border-bottom:1px solid #d0d0d0;background:#d0e6fd;"></div>
<div class="t grp" style="left:1119px;top:389px;white-space:pre;transform-origin:0 50%;transform:scaleX(0.9634)">Option 2: RC Structure</div>
<div class="a" style="left:987px;top:406px;width:18px;height:21px;border-right:1px solid #d0d0d0;border-bottom:1px solid #d0d0d0;"></div>
<div class="c" style="left:987px;top:410px;width:17px">20</div>
<div class="a" style="left:1005px;top:406px;width:111px;height:21px;border-right:1px solid #d0d0d0;border-bottom:1px solid #d0d0d0;background:#d0e6fd;"></div>
<div class="a" style="left:1116px;top:406px;width:361px;height:21px;border-right:1px solid #d0d0d0;border-bottom:1px solid #d0d0d0;background:#d0e6fd;"></div>
<div class="a" style="left:1477px;top:406px;width:81px;height:21px;border-right:1px solid #d0d0d0;border-bottom:1px solid #d0d0d0;background:#d0e6fd;"></div>
<div class="a" style="left:1558px;top:406px;width:101px;height:21px;border-right:1px solid #d0d0d0;border-bottom:1px solid #d0d0d0;background:#d0e6fd;"></div>
<div class="a" style="left:1659px;top:406px;width:81px;height:21px;border-right:1px solid #d0d0d0;border-bottom:1px solid #d0d0d0;background:#d0e6fd;"></div>
<div class="a" style="left:1740px;top:406px;width:121px;height:21px;border-right:1px solid #d0d0d0;border-bottom:1px solid #d0d0d0;background:#d0e6fd;"></div>
<div class="t grp" style="left:1119px;top:410px;white-space:pre;transform-origin:0 50%;transform:scaleX(0.9331)">ROOF SYSTEM</div>
<div class="a" style="left:987px;top:427px;width:18px;height:21px;border-right:1px solid #d0d0d0;border-bottom:1px solid #d0d0d0;"></div>
<div class="c" style="left:987px;top:431px;width:17px">21</div>
<div class="a" style="left:1005px;top:427px;width:111px;height:21px;border-right:1px solid #d0d0d0;border-bottom:1px solid #d0d0d0;background:#d0e6fd;"></div>
<div class="a" style="left:1116px;top:427px;width:361px;height:21px;border-right:1px solid #d0d0d0;border-bottom:1px solid #d0d0d0;background:#d0e6fd;"></div>
<div class="a" style="left:1477px;top:427px;width:81px;height:21px;border-right:1px solid #d0d0d0;border-bottom:1px solid #d0d0d0;background:#d0e6fd;"></div>
<div class="a" style="left:1558px;top:427px;width:101px;height:21px;border-right:1px solid #d0d0d0;border-bottom:1px solid #d0d0d0;background:#d0e6fd;"></div>
<div class="a" style="left:1659px;top:427px;width:81px;height:21px;border-right:1px solid #d0d0d0;border-bottom:1px solid #d0d0d0;background:#d0e6fd;"></div>
<div class="a" style="left:1740px;top:427px;width:121px;height:21px;border-right:1px solid #d0d0d0;border-bottom:1px solid #d0d0d0;background:#d0e6fd;"></div>
<div class="t grp" style="left:1119px;top:431px;white-space:pre;transform-origin:0 50%;transform:scaleX(0.9585)">WALLS</div>
<div class="a" style="left:1006px;top:429px;width:14px;height:14px;background:#fff;border:1px solid #9a9a9a;border-radius:2.5px"></div>
<div class="a" style="left:1009px;top:436px;width:8px;height:1px;background:#000"></div>
<div class="vl" style="left:1013px;top:443px;height:4px;background:#dedede"></div>
<div class="a" style="left:987px;top:448px;width:18px;height:21px;border-right:1px solid #d0d0d0;border-bottom:1px solid #d0d0d0;background:#cfe4fc;"></div>
<div class="c" style="left:987px;top:452px;width:17px">22</div>
<div class="a" style="left:1005px;top:448px;width:111px;height:21px;border-right:1px solid #d0d0d0;border-bottom:1px solid #d0d0d0;"></div>
<div class="a" style="left:1116px;top:448px;width:361px;height:21px;border-right:1px solid #d0d0d0;border-bottom:1px solid #d0d0d0;background:#d0e6fd;"></div>
<div class="a" style="left:1477px;top:448px;width:81px;height:21px;border-right:1px solid #d0d0d0;border-bottom:1px solid #d0d0d0;"></div>
<div class="a" style="left:1558px;top:448px;width:101px;height:21px;border-right:1px solid #d0d0d0;border-bottom:1px solid #d0d0d0;"></div>
<div class="a" style="left:1659px;top:448px;width:81px;height:21px;border-right:1px solid #d0d0d0;border-bottom:1px solid #d0d0d0;"></div>
<div class="a" style="left:1740px;top:448px;width:121px;height:21px;border-right:1px solid #d0d0d0;border-bottom:1px solid #d0d0d0;"></div>
<div class="t g" style="left:1119px;top:452px;letter-spacing:0.11px;white-space:pre">&lt;=200 thick RCwall</div>
<div class="t g" style="left:1035px;top:452px">11</div>
<div class="t g" style="left:1480px;top:452px">m3</div>
<div class="r g" style="left:1558px;top:452px;width:97px;letter-spacing:0.25px">0.000</div>
<div class="vl" style="left:1013px;top:448px;height:20px;background:#dedede"></div>
<div class="hl" style="left:1013px;top:457px;width:18px;background:#dedede"></div>
<div class="a" style="left:987px;top:469px;width:18px;height:21px;border-right:1px solid #d0d0d0;border-bottom:1px solid #d0d0d0;"></div>
<div class="c" style="left:987px;top:473px;width:17px">23</div>
<div class="a" style="left:1005px;top:469px;width:111px;height:21px;border-right:1px solid #d0d0d0;border-bottom:1px solid #d0d0d0;"></div>
<div class="a" style="left:1116px;top:469px;width:361px;height:21px;border-right:1px solid #d0d0d0;border-bottom:1px solid #d0d0d0;"></div>
<div class="a" style="left:1477px;top:469px;width:81px;height:21px;border-right:1px solid #d0d0d0;border-bottom:1px solid #d0d0d0;"></div>
<div class="a" style="left:1558px;top:469px;width:101px;height:21px;border-right:1px solid #d0d0d0;border-bottom:1px solid #d0d0d0;"></div>
<div class="a" style="left:1659px;top:469px;width:81px;height:21px;border-right:1px solid #d0d0d0;border-bottom:1px solid #d0d0d0;"></div>
<div class="a" style="left:1740px;top:469px;width:121px;height:21px;border-right:1px solid #d0d0d0;border-bottom:1px solid #d0d0d0;"></div>
<div class="t g" style="left:1119px;top:473px;letter-spacing:0.354px;white-space:pre">230mm RCwall</div>
<div class="t g" style="left:1035px;top:473px">12</div>
<div class="t g" style="left:1480px;top:473px">m3</div>
<div class="r g" style="left:1558px;top:473px;width:97px;letter-spacing:0.25px">0.000</div>
<div class="vl" style="left:1013px;top:469px;height:20px;background:#dedede"></div>
<div class="hl" style="left:1013px;top:478px;width:18px;background:#dedede"></div>
<div class="a" style="left:987px;top:490px;width:18px;height:21px;border-right:1px solid #d0d0d0;border-bottom:1px solid #d0d0d0;"></div>
<div class="c" style="left:987px;top:494px;width:17px">24</div>
<div class="a" style="left:1005px;top:490px;width:111px;height:21px;border-right:1px solid #d0d0d0;border-bottom:1px solid #d0d0d0;"></div>
<div class="a" style="left:1116px;top:490px;width:361px;height:21px;border-right:1px solid #d0d0d0;border-bottom:1px solid #d0d0d0;"></div>
<div class="a" style="left:1477px;top:490px;width:81px;height:21px;border-right:1px solid #d0d0d0;border-bottom:1px solid #d0d0d0;"></div>
<div class="a" style="left:1558px;top:490px;width:101px;height:21px;border-right:1px solid #d0d0d0;border-bottom:1px solid #d0d0d0;"></div>
<div class="a" style="left:1659px;top:490px;width:81px;height:21px;border-right:1px solid #d0d0d0;border-bottom:1px solid #d0d0d0;"></div>
<div class="a" style="left:1740px;top:490px;width:121px;height:21px;border-right:1px solid #d0d0d0;border-bottom:1px solid #d0d0d0;"></div>
<div class="t g" style="left:1119px;top:494px;letter-spacing:0.354px;white-space:pre">300mm RCwall</div>
<div class="t g" style="left:1035px;top:494px">13</div>
<div class="t g" style="left:1480px;top:494px">m3</div>
<div class="r g" style="left:1558px;top:494px;width:97px;letter-spacing:0.25px">0.000</div>
<div class="vl" style="left:1013px;top:490px;height:10px;background:#dedede"></div>
<div class="hl" style="left:1013px;top:499px;width:18px;background:#dedede"></div>
<div class="a" style="left:987px;top:511px;width:18px;height:21px;border-right:1px solid #d0d0d0;border-bottom:1px solid #d0d0d0;"></div>
<div class="c" style="left:987px;top:515px;width:17px">25</div>
<div class="a" style="left:1005px;top:511px;width:111px;height:21px;border-right:1px solid #d0d0d0;border-bottom:1px solid #d0d0d0;background:#d0e6fd;"></div>
<div class="a" style="left:1116px;top:511px;width:361px;height:21px;border-right:1px solid #d0d0d0;border-bottom:1px solid #d0d0d0;background:#d0e6fd;"></div>
<div class="a" style="left:1477px;top:511px;width:81px;height:21px;border-right:1px solid #d0d0d0;border-bottom:1px solid #d0d0d0;background:#d0e6fd;"></div>
<div class="a" style="left:1558px;top:511px;width:101px;height:21px;border-right:1px solid #d0d0d0;border-bottom:1px solid #d0d0d0;background:#d0e6fd;"></div>
<div class="a" style="left:1659px;top:511px;width:81px;height:21px;border-right:1px solid #d0d0d0;border-bottom:1px solid #d0d0d0;background:#d0e6fd;"></div>
<div class="a" style="left:1740px;top:511px;width:121px;height:21px;border-right:1px solid #d0d0d0;border-bottom:1px solid #d0d0d0;background:#d0e6fd;"></div>
<div class="t grp" style="left:1119px;top:515px;white-space:pre;transform-origin:0 50%;transform:scaleX(0.9423)">DOORS &amp;  WINDOWS OPENING</div>
<div class="a" style="left:1006px;top:513px;width:14px;height:14px;background:#fff;border:1px solid #9a9a9a;border-radius:2.5px"></div>
<div class="a" style="left:1009px;top:520px;width:8px;height:1px;background:#000"></div>
<div class="vl" style="left:1013px;top:527px;height:4px;background:#dedede"></div>
<div class="a" style="left:987px;top:532px;width:18px;height:21px;border-right:1px solid #d0d0d0;border-bottom:1px solid #d0d0d0;"></div>
<div class="c" style="left:987px;top:536px;width:17px">26</div>
<div class="a" style="left:1005px;top:532px;width:111px;height:21px;border-right:1px solid #d0d0d0;border-bottom:1px solid #d0d0d0;"></div>
<div class="a" style="left:1116px;top:532px;width:361px;height:21px;border-right:1px solid #d0d0d0;border-bottom:1px solid #d0d0d0;"></div>
<div class="a" style="left:1477px;top:532px;width:81px;height:21px;border-right:1px solid #d0d0d0;border-bottom:1px solid #d0d0d0;"></div>
<div class="a" style="left:1558px;top:532px;width:101px;height:21px;border-right:1px solid #d0d0d0;border-bottom:1px solid #d0d0d0;"></div>
<div class="a" style="left:1659px;top:532px;width:81px;height:21px;border-right:1px solid #d0d0d0;border-bottom:1px solid #d0d0d0;"></div>
<div class="a" style="left:1740px;top:532px;width:121px;height:21px;border-right:1px solid #d0d0d0;border-bottom:1px solid #d0d0d0;"></div>
<div class="t g" style="left:1119px;top:536px;letter-spacing:0.154px;white-space:pre">Window: Sliding window, 4300 x 500mm</div>
<div class="t g" style="left:1035px;top:536px">14</div>
<div class="t g" style="left:1480px;top:536px">m2</div>
<div class="r g" style="left:1558px;top:536px;width:97px;letter-spacing:0.25px">0.000</div>
<div class="vl" style="left:1013px;top:532px;height:20px;background:#dedede"></div>
<div class="hl" style="left:1013px;top:541px;width:18px;background:#dedede"></div>
<div class="a" style="left:987px;top:553px;width:18px;height:21px;border-right:1px solid #d0d0d0;border-bottom:1px solid #d0d0d0;"></div>
<div class="c" style="left:987px;top:557px;width:17px">27</div>
<div class="a" style="left:1005px;top:553px;width:111px;height:21px;border-right:1px solid #d0d0d0;border-bottom:1px solid #d0d0d0;"></div>
<div class="a" style="left:1116px;top:553px;width:361px;height:21px;border-right:1px solid #d0d0d0;border-bottom:1px solid #d0d0d0;"></div>
<div class="a" style="left:1477px;top:553px;width:81px;height:21px;border-right:1px solid #d0d0d0;border-bottom:1px solid #d0d0d0;"></div>
<div class="a" style="left:1558px;top:553px;width:101px;height:21px;border-right:1px solid #d0d0d0;border-bottom:1px solid #d0d0d0;"></div>
<div class="a" style="left:1659px;top:553px;width:81px;height:21px;border-right:1px solid #d0d0d0;border-bottom:1px solid #d0d0d0;"></div>
<div class="a" style="left:1740px;top:553px;width:121px;height:21px;border-right:1px solid #d0d0d0;border-bottom:1px solid #d0d0d0;"></div>
<div class="t g" style="left:1119px;top:557px;letter-spacing:0.152px;white-space:pre">Window: Sliding window, 4300 x 2700mm</div>
<div class="t g" style="left:1035px;top:557px">15</div>
<div class="t g" style="left:1480px;top:557px">m2</div>
<div class="r g" style="left:1558px;top:557px;width:97px;letter-spacing:0.25px">0.000</div>
<div class="vl" style="left:1013px;top:553px;height:20px;background:#dedede"></div>
<div class="hl" style="left:1013px;top:562px;width:18px;background:#dedede"></div>
<div class="a" style="left:987px;top:574px;width:18px;height:21px;border-right:1px solid #d0d0d0;border-bottom:1px solid #d0d0d0;"></div>
<div class="c" style="left:987px;top:578px;width:17px">28</div>
<div class="a" style="left:1005px;top:574px;width:111px;height:21px;border-right:1px solid #d0d0d0;border-bottom:1px solid #d0d0d0;"></div>
<div class="a" style="left:1116px;top:574px;width:361px;height:21px;border-right:1px solid #d0d0d0;border-bottom:1px solid #d0d0d0;"></div>
<div class="a" style="left:1477px;top:574px;width:81px;height:21px;border-right:1px solid #d0d0d0;border-bottom:1px solid #d0d0d0;"></div>
<div class="a" style="left:1558px;top:574px;width:101px;height:21px;border-right:1px solid #d0d0d0;border-bottom:1px solid #d0d0d0;"></div>
<div class="a" style="left:1659px;top:574px;width:81px;height:21px;border-right:1px solid #d0d0d0;border-bottom:1px solid #d0d0d0;"></div>
<div class="a" style="left:1740px;top:574px;width:121px;height:21px;border-right:1px solid #d0d0d0;border-bottom:1px solid #d0d0d0;"></div>
<div class="t g" style="left:1119px;top:578px;letter-spacing:0.142px;white-space:pre">Door: Double door, 1570 x 2140mm</div>
<div class="t g" style="left:1035px;top:578px">16</div>
<div class="t g" style="left:1480px;top:578px">m2</div>
<div class="r g" style="left:1558px;top:578px;width:97px;letter-spacing:0.25px">0.000</div>
<div class="vl" style="left:1013px;top:574px;height:20px;background:#dedede"></div>
<div class="hl" style="left:1013px;top:583px;width:18px;background:#dedede"></div>
<div class="a" style="left:987px;top:595px;width:18px;height:21px;border-right:1px solid #d0d0d0;border-bottom:1px solid #d0d0d0;"></div>
<div class="c" style="left:987px;top:599px;width:17px">29</div>
<div class="a" style="left:1005px;top:595px;width:111px;height:21px;border-right:1px solid #d0d0d0;border-bottom:1px solid #d0d0d0;"></div>
<div class="a" style="left:1116px;top:595px;width:361px;height:21px;border-right:1px solid #d0d0d0;border-bottom:1px solid #d0d0d0;"></div>
<div class="a" style="left:1477px;top:595px;width:81px;height:21px;border-right:1px solid #d0d0d0;border-bottom:1px solid #d0d0d0;"></div>
<div class="a" style="left:1558px;top:595px;width:101px;height:21px;border-right:1px solid #d0d0d0;border-bottom:1px solid #d0d0d0;"></div>
<div class="a" style="left:1659px;top:595px;width:81px;height:21px;border-right:1px solid #d0d0d0;border-bottom:1px solid #d0d0d0;"></div>
<div class="a" style="left:1740px;top:595px;width:121px;height:21px;border-right:1px solid #d0d0d0;border-bottom:1px solid #d0d0d0;"></div>
<div class="t g" style="left:1119px;top:599px;letter-spacing:0.134px;white-space:pre">Door: Single swing left, 920 x 2140mm</div>
<div class="t g" style="left:1035px;top:599px">17</div>
<div class="t g" style="left:1480px;top:599px">m2</div>
<div class="r g" style="left:1558px;top:599px;width:97px;letter-spacing:0.25px">0.000</div>
<div class="vl" style="left:1013px;top:595px;height:10px;background:#dedede"></div>
<div class="hl" style="left:1013px;top:604px;width:18px;background:#dedede"></div>
<div class="a" style="left:987px;top:616px;width:18px;height:21px;border-right:1px solid #d0d0d0;border-bottom:1px solid #d0d0d0;"></div>
<div class="c" style="left:987px;top:620px;width:17px">30</div>
<div class="a" style="left:1005px;top:616px;width:111px;height:21px;border-right:1px solid #d0d0d0;border-bottom:1px solid #d0d0d0;background:#d0e6fd;"></div>
<div class="a" style="left:1116px;top:616px;width:361px;height:21px;border-right:1px solid #d0d0d0;border-bottom:1px solid #d0d0d0;background:#d0e6fd;"></div>
<div class="a" style="left:1477px;top:616px;width:81px;height:21px;border-right:1px solid #d0d0d0;border-bottom:1px solid #d0d0d0;background:#d0e6fd;"></div>
<div class="a" style="left:1558px;top:616px;width:101px;height:21px;border-right:1px solid #d0d0d0;border-bottom:1px solid #d0d0d0;background:#d0e6fd;"></div>
<div class="a" style="left:1659px;top:616px;width:81px;height:21px;border-right:1px solid #d0d0d0;border-bottom:1px solid #d0d0d0;background:#d0e6fd;"></div>
<div class="a" style="left:1740px;top:616px;width:121px;height:21px;border-right:1px solid #d0d0d0;border-bottom:1px solid #d0d0d0;background:#d0e6fd;"></div>
<div class="t grp" style="left:1119px;top:620px;white-space:pre;transform-origin:0 50%;transform:scaleX(0.9413)">CURTAIN WALL SYSTEM</div>
<div class="a" style="left:1006px;top:618px;width:14px;height:14px;background:#fff;border:1px solid #9a9a9a;border-radius:2.5px"></div>
<div class="a" style="left:1009px;top:625px;width:8px;height:1px;background:#000"></div>
<div class="vl" style="left:1013px;top:632px;height:4px;background:#dedede"></div>
<div class="a" style="left:987px;top:637px;width:18px;height:21px;border-right:1px solid #d0d0d0;border-bottom:1px solid #d0d0d0;"></div>
<div class="c" style="left:987px;top:641px;width:17px">31</div>
<div class="a" style="left:1005px;top:637px;width:111px;height:21px;border-right:1px solid #d0d0d0;border-bottom:1px solid #d0d0d0;"></div>
<div class="a" style="left:1116px;top:637px;width:361px;height:21px;border-right:1px solid #d0d0d0;border-bottom:1px solid #d0d0d0;"></div>
<div class="a" style="left:1477px;top:637px;width:81px;height:21px;border-right:1px solid #d0d0d0;border-bottom:1px solid #d0d0d0;"></div>
<div class="a" style="left:1558px;top:637px;width:101px;height:21px;border-right:1px solid #d0d0d0;border-bottom:1px solid #d0d0d0;"></div>
<div class="a" style="left:1659px;top:637px;width:81px;height:21px;border-right:1px solid #d0d0d0;border-bottom:1px solid #d0d0d0;"></div>
<div class="a" style="left:1740px;top:637px;width:121px;height:21px;border-right:1px solid #d0d0d0;border-bottom:1px solid #d0d0d0;"></div>
<div class="t g" style="left:1119px;top:641px;letter-spacing:0.209px;white-space:pre">Curtain wall system, glass 40</div>
<div class="t g" style="left:1035px;top:641px">18</div>
<div class="t g" style="left:1480px;top:641px">m2</div>
<div class="r g" style="left:1558px;top:641px;width:97px;letter-spacing:0.25px">0.000</div>
<div class="vl" style="left:1013px;top:637px;height:20px;background:#dedede"></div>
<div class="hl" style="left:1013px;top:646px;width:18px;background:#dedede"></div>
<div class="a" style="left:987px;top:658px;width:18px;height:21px;border-right:1px solid #d0d0d0;border-bottom:1px solid #d0d0d0;"></div>
<div class="c" style="left:987px;top:662px;width:17px">32</div>
<div class="a" style="left:1005px;top:658px;width:111px;height:21px;border-right:1px solid #d0d0d0;border-bottom:1px solid #d0d0d0;"></div>
<div class="a" style="left:1116px;top:658px;width:361px;height:21px;border-right:1px solid #d0d0d0;border-bottom:1px solid #d0d0d0;"></div>
<div class="a" style="left:1477px;top:658px;width:81px;height:21px;border-right:1px solid #d0d0d0;border-bottom:1px solid #d0d0d0;"></div>
<div class="a" style="left:1558px;top:658px;width:101px;height:21px;border-right:1px solid #d0d0d0;border-bottom:1px solid #d0d0d0;"></div>
<div class="a" style="left:1659px;top:658px;width:81px;height:21px;border-right:1px solid #d0d0d0;border-bottom:1px solid #d0d0d0;"></div>
<div class="a" style="left:1740px;top:658px;width:121px;height:21px;border-right:1px solid #d0d0d0;border-bottom:1px solid #d0d0d0;"></div>
<div class="t g" style="left:1119px;top:662px;letter-spacing:0.209px;white-space:pre">Curtain wall system, glass 50</div>
<div class="t g" style="left:1035px;top:662px">19</div>
<div class="t g" style="left:1480px;top:662px">m2</div>
<div class="r g" style="left:1558px;top:662px;width:97px;letter-spacing:0.25px">0.000</div>
<div class="vl" style="left:1013px;top:658px;height:10px;background:#dedede"></div>
<div class="hl" style="left:1013px;top:667px;width:18px;background:#dedede"></div>
<div class="a" style="left:987px;top:679px;width:18px;height:21px;border-right:1px solid #d0d0d0;border-bottom:1px solid #d0d0d0;"></div>
<div class="c" style="left:987px;top:683px;width:17px">33</div>
<div class="a" style="left:1005px;top:679px;width:111px;height:21px;border-right:1px solid #d0d0d0;border-bottom:1px solid #d0d0d0;background:#d0e6fd;"></div>
<div class="a" style="left:1116px;top:679px;width:361px;height:21px;border-right:1px solid #d0d0d0;border-bottom:1px solid #d0d0d0;background:#d0e6fd;"></div>
<div class="a" style="left:1477px;top:679px;width:81px;height:21px;border-right:1px solid #d0d0d0;border-bottom:1px solid #d0d0d0;background:#d0e6fd;"></div>
<div class="a" style="left:1558px;top:679px;width:101px;height:21px;border-right:1px solid #d0d0d0;border-bottom:1px solid #d0d0d0;background:#d0e6fd;"></div>
<div class="a" style="left:1659px;top:679px;width:81px;height:21px;border-right:1px solid #d0d0d0;border-bottom:1px solid #d0d0d0;background:#d0e6fd;"></div>
<div class="a" style="left:1740px;top:679px;width:121px;height:21px;border-right:1px solid #d0d0d0;border-bottom:1px solid #d0d0d0;background:#d0e6fd;"></div>
<div class="t grp" style="left:1119px;top:683px;white-space:pre;transform-origin:0 50%;transform:scaleX(0.9327)">MISCELLANEOUS</div>
<div class="a" style="left:1006px;top:681px;width:14px;height:14px;background:#fff;border:1px solid #9a9a9a;border-radius:2.5px"></div>
<div class="a" style="left:1009px;top:688px;width:8px;height:1px;background:#000"></div>
<div class="vl" style="left:1013px;top:695px;height:4px;background:#dedede"></div>
<div class="a" style="left:987px;top:700px;width:18px;height:21px;border-right:1px solid #d0d0d0;border-bottom:1px solid #d0d0d0;"></div>
<div class="c" style="left:987px;top:704px;width:17px">34</div>
<div class="a" style="left:1005px;top:700px;width:111px;height:21px;border-right:1px solid #d0d0d0;border-bottom:1px solid #d0d0d0;"></div>
<div class="a" style="left:1116px;top:700px;width:361px;height:21px;border-right:1px solid #d0d0d0;border-bottom:1px solid #d0d0d0;"></div>
<div class="a" style="left:1477px;top:700px;width:81px;height:21px;border-right:1px solid #d0d0d0;border-bottom:1px solid #d0d0d0;"></div>
<div class="a" style="left:1558px;top:700px;width:101px;height:21px;border-right:1px solid #d0d0d0;border-bottom:1px solid #d0d0d0;"></div>
<div class="a" style="left:1659px;top:700px;width:81px;height:21px;border-right:1px solid #d0d0d0;border-bottom:1px solid #d0d0d0;"></div>
<div class="a" style="left:1740px;top:700px;width:121px;height:21px;border-right:1px solid #d0d0d0;border-bottom:1px solid #d0d0d0;"></div>
<div class="t g" style="left:1119px;top:704px;letter-spacing:0.232px;white-space:pre">Bookshelf: wood 4360mm x 467mm</div>
<div class="t g" style="left:1035px;top:704px">20</div>
<div class="t g" style="left:1480px;top:704px">No</div>
<div class="r g" style="left:1558px;top:704px;width:97px;letter-spacing:0.25px">0.000</div>
<div class="vl" style="left:1013px;top:700px;height:10px;background:#dedede"></div>
<div class="hl" style="left:1013px;top:709px;width:18px;background:#dedede"></div>
<div class="a" style="left:987px;top:721px;width:18px;height:21px;border-right:1px solid #d0d0d0;border-bottom:1px solid #d0d0d0;"></div>
<div class="c" style="left:987px;top:725px;width:17px">35</div>
<div class="a" style="left:1005px;top:721px;width:111px;height:21px;border-right:1px solid #d0d0d0;border-bottom:1px solid #d0d0d0;background:#d0e6fd;"></div>
<div class="a" style="left:1116px;top:721px;width:361px;height:21px;border-right:1px solid #d0d0d0;border-bottom:1px solid #d0d0d0;background:#d0e6fd;"></div>
<div class="a" style="left:1477px;top:721px;width:81px;height:21px;border-right:1px solid #d0d0d0;border-bottom:1px solid #d0d0d0;background:#d0e6fd;"></div>
<div class="a" style="left:1558px;top:721px;width:101px;height:21px;border-right:1px solid #d0d0d0;border-bottom:1px solid #d0d0d0;background:#d0e6fd;"></div>
<div class="a" style="left:1659px;top:721px;width:81px;height:21px;border-right:1px solid #d0d0d0;border-bottom:1px solid #d0d0d0;background:#d0e6fd;"></div>
<div class="a" style="left:1740px;top:721px;width:121px;height:21px;border-right:1px solid #d0d0d0;border-bottom:1px solid #d0d0d0;background:#d0e6fd;"></div>
<div class="t grp" style="left:1119px;top:725px;white-space:pre;transform-origin:0 50%;transform:scaleX(0.9188)">FLOOR FINISHES</div>
<div class="a" style="left:1006px;top:723px;width:14px;height:14px;background:#fff;border:1px solid #9a9a9a;border-radius:2.5px"></div>
<div class="a" style="left:1009px;top:730px;width:8px;height:1px;background:#000"></div>
<div class="vl" style="left:1013px;top:737px;height:4px;background:#dedede"></div>
<div class="a" style="left:987px;top:742px;width:18px;height:21px;border-right:1px solid #d0d0d0;border-bottom:1px solid #d0d0d0;"></div>
<div class="c" style="left:987px;top:746px;width:17px">36</div>
<div class="a" style="left:1005px;top:742px;width:111px;height:21px;border-right:1px solid #d0d0d0;border-bottom:1px solid #d0d0d0;"></div>
<div class="a" style="left:1116px;top:742px;width:361px;height:21px;border-right:1px solid #d0d0d0;border-bottom:1px solid #d0d0d0;"></div>
<div class="a" style="left:1477px;top:742px;width:81px;height:21px;border-right:1px solid #d0d0d0;border-bottom:1px solid #d0d0d0;"></div>
<div class="a" style="left:1558px;top:742px;width:101px;height:21px;border-right:1px solid #d0d0d0;border-bottom:1px solid #d0d0d0;"></div>
<div class="a" style="left:1659px;top:742px;width:81px;height:21px;border-right:1px solid #d0d0d0;border-bottom:1px solid #d0d0d0;"></div>
<div class="a" style="left:1740px;top:742px;width:121px;height:21px;border-right:1px solid #d0d0d0;border-bottom:1px solid #d0d0d0;"></div>
<div class="t g" style="left:1119px;top:746px;letter-spacing:0.192px;white-space:pre">Flooring: wood, rigidinsulation</div>
<div class="t g" style="left:1035px;top:746px">21</div>
<div class="t g" style="left:1480px;top:746px">m2</div>
<div class="r g" style="left:1558px;top:746px;width:97px;letter-spacing:0.25px">0.000</div>
<div class="vl" style="left:1013px;top:742px;height:20px;background:#dedede"></div>
<div class="hl" style="left:1013px;top:751px;width:18px;background:#dedede"></div>
<div class="a" style="left:987px;top:763px;width:18px;height:21px;border-right:1px solid #d0d0d0;border-bottom:1px solid #d0d0d0;"></div>
<div class="c" style="left:987px;top:767px;width:17px">37</div>
<div class="a" style="left:1005px;top:763px;width:111px;height:21px;border-right:1px solid #d0d0d0;border-bottom:1px solid #d0d0d0;"></div>
<div class="a" style="left:1116px;top:763px;width:361px;height:21px;border-right:1px solid #d0d0d0;border-bottom:1px solid #d0d0d0;"></div>
<div class="a" style="left:1477px;top:763px;width:81px;height:21px;border-right:1px solid #d0d0d0;border-bottom:1px solid #d0d0d0;"></div>
<div class="a" style="left:1558px;top:763px;width:101px;height:21px;border-right:1px solid #d0d0d0;border-bottom:1px solid #d0d0d0;"></div>
<div class="a" style="left:1659px;top:763px;width:81px;height:21px;border-right:1px solid #d0d0d0;border-bottom:1px solid #d0d0d0;"></div>
<div class="a" style="left:1740px;top:763px;width:121px;height:21px;border-right:1px solid #d0d0d0;border-bottom:1px solid #d0d0d0;"></div>
<div class="t g" style="left:1119px;top:767px;letter-spacing:0.141px;white-space:pre">Flooring: concrete, rigidinsulation (waterproof)</div>
<div class="t g" style="left:1035px;top:767px">22</div>
<div class="t g" style="left:1480px;top:767px">m2</div>
<div class="r g" style="left:1558px;top:767px;width:97px;letter-spacing:0.25px">0.000</div>
<div class="vl" style="left:1013px;top:763px;height:10px;background:#dedede"></div>
<div class="hl" style="left:1013px;top:772px;width:18px;background:#dedede"></div>
<div class="a" style="left:987px;top:784px;width:18px;height:21px;border-right:1px solid #d0d0d0;border-bottom:1px solid #d0d0d0;"></div>
<div class="c" style="left:987px;top:788px;width:17px">38</div>
<div class="a" style="left:1005px;top:784px;width:111px;height:21px;border-right:1px solid #d0d0d0;border-bottom:1px solid #d0d0d0;background:#d0e6fd;"></div>
<div class="a" style="left:1116px;top:784px;width:361px;height:21px;border-right:1px solid #d0d0d0;border-bottom:1px solid #d0d0d0;background:#d0e6fd;"></div>
<div class="a" style="left:1477px;top:784px;width:81px;height:21px;border-right:1px solid #d0d0d0;border-bottom:1px solid #d0d0d0;background:#d0e6fd;"></div>
<div class="a" style="left:1558px;top:784px;width:101px;height:21px;border-right:1px solid #d0d0d0;border-bottom:1px solid #d0d0d0;background:#d0e6fd;"></div>
<div class="a" style="left:1659px;top:784px;width:81px;height:21px;border-right:1px solid #d0d0d0;border-bottom:1px solid #d0d0d0;background:#d0e6fd;"></div>
<div class="a" style="left:1740px;top:784px;width:121px;height:21px;border-right:1px solid #d0d0d0;border-bottom:1px solid #d0d0d0;background:#d0e6fd;"></div>
<div class="t grp" style="left:1119px;top:788px;white-space:pre;transform-origin:0 50%;transform:scaleX(0.8989)">CEILING</div>
<div class="a" style="left:1006px;top:786px;width:14px;height:14px;background:#fff;border:1px solid #9a9a9a;border-radius:2.5px"></div>
<div class="a" style="left:1009px;top:793px;width:8px;height:1px;background:#000"></div>
<div class="vl" style="left:1013px;top:800px;height:4px;background:#dedede"></div>
<div class="a" style="left:987px;top:805px;width:18px;height:21px;border-right:1px solid #d0d0d0;border-bottom:1px solid #d0d0d0;"></div>
<div class="c" style="left:987px;top:809px;width:17px">39</div>
<div class="a" style="left:1005px;top:805px;width:111px;height:21px;border-right:1px solid #d0d0d0;border-bottom:1px solid #d0d0d0;"></div>
<div class="a" style="left:1116px;top:805px;width:361px;height:21px;border-right:1px solid #d0d0d0;border-bottom:1px solid #d0d0d0;"></div>
<div class="a" style="left:1477px;top:805px;width:81px;height:21px;border-right:1px solid #d0d0d0;border-bottom:1px solid #d0d0d0;"></div>
<div class="a" style="left:1558px;top:805px;width:101px;height:21px;border-right:1px solid #d0d0d0;border-bottom:1px solid #d0d0d0;"></div>
<div class="a" style="left:1659px;top:805px;width:81px;height:21px;border-right:1px solid #d0d0d0;border-bottom:1px solid #d0d0d0;"></div>
<div class="a" style="left:1740px;top:805px;width:121px;height:21px;border-right:1px solid #d0d0d0;border-bottom:1px solid #d0d0d0;"></div>
<div class="t g" style="left:1119px;top:809px;letter-spacing:0.057px;white-space:pre">Area of Ceiling</div>
<div class="t g" style="left:1035px;top:809px">23</div>
<div class="t g" style="left:1480px;top:809px">m2</div>
<div class="r g" style="left:1558px;top:809px;width:97px;letter-spacing:0.25px">0.000</div>
<div class="vl" style="left:1013px;top:805px;height:20px;background:#dedede"></div>
<div class="hl" style="left:1013px;top:814px;width:18px;background:#dedede"></div>
<div class="a" style="left:987px;top:826px;width:18px;height:21px;border-right:1px solid #d0d0d0;border-bottom:1px solid #d0d0d0;"></div>
<div class="c" style="left:987px;top:830px;width:17px">40</div>
<div class="a" style="left:1005px;top:826px;width:111px;height:21px;border-right:1px solid #d0d0d0;border-bottom:1px solid #d0d0d0;"></div>
<div class="a" style="left:1116px;top:826px;width:361px;height:21px;border-right:1px solid #d0d0d0;border-bottom:1px solid #d0d0d0;"></div>
<div class="a" style="left:1477px;top:826px;width:81px;height:21px;border-right:1px solid #d0d0d0;border-bottom:1px solid #d0d0d0;"></div>
<div class="a" style="left:1558px;top:826px;width:101px;height:21px;border-right:1px solid #d0d0d0;border-bottom:1px solid #d0d0d0;"></div>
<div class="a" style="left:1659px;top:826px;width:81px;height:21px;border-right:1px solid #d0d0d0;border-bottom:1px solid #d0d0d0;"></div>
<div class="a" style="left:1740px;top:826px;width:121px;height:21px;border-right:1px solid #d0d0d0;border-bottom:1px solid #d0d0d0;"></div>
<div class="t g" style="left:1119px;top:830px;letter-spacing:-0.184px;white-space:pre">WALL FINISHES</div>
<div class="t g" style="left:1480px;top:830px">m2</div>
<div class="r g" style="left:1558px;top:830px;width:97px;letter-spacing:0.25px">0.000</div>
<div class="vl" style="left:1013px;top:826px;height:20px;background:#dedede"></div>
<div class="hl" style="left:1013px;top:835px;width:18px;background:#dedede"></div>
<div class="a" style="left:987px;top:847px;width:18px;height:21px;border-right:1px solid #d0d0d0;border-bottom:1px solid #d0d0d0;"></div>
<div class="c" style="left:987px;top:851px;width:17px">41</div>
<div class="a" style="left:1005px;top:847px;width:111px;height:21px;border-right:1px solid #d0d0d0;border-bottom:1px solid #d0d0d0;"></div>
<div class="a" style="left:1116px;top:847px;width:361px;height:21px;border-right:1px solid #d0d0d0;border-bottom:1px solid #d0d0d0;"></div>
<div class="a" style="left:1477px;top:847px;width:81px;height:21px;border-right:1px solid #d0d0d0;border-bottom:1px solid #d0d0d0;"></div>
<div class="a" style="left:1558px;top:847px;width:101px;height:21px;border-right:1px solid #d0d0d0;border-bottom:1px solid #d0d0d0;"></div>
<div class="a" style="left:1659px;top:847px;width:81px;height:21px;border-right:1px solid #d0d0d0;border-bottom:1px solid #d0d0d0;"></div>
<div class="a" style="left:1740px;top:847px;width:121px;height:21px;border-right:1px solid #d0d0d0;border-bottom:1px solid #d0d0d0;"></div>
<div class="t g" style="left:1119px;top:851px;letter-spacing:0.198px;white-space:pre">wall finish: outdoor,perforated skin,stainless steel</div>
<div class="t g" style="left:1035px;top:851px">24</div>
<div class="t g" style="left:1480px;top:851px">m2</div>
<div class="r g" style="left:1558px;top:851px;width:97px;letter-spacing:0.25px">0.000</div>
<div class="vl" style="left:1013px;top:847px;height:20px;background:#dedede"></div>
<div class="hl" style="left:1013px;top:856px;width:18px;background:#dedede"></div>
<div class="a" style="left:987px;top:868px;width:18px;height:21px;border-right:1px solid #d0d0d0;border-bottom:1px solid #d0d0d0;"></div>
<div class="c" style="left:987px;top:872px;width:17px">42</div>
<div class="a" style="left:1005px;top:868px;width:111px;height:21px;border-right:1px solid #d0d0d0;border-bottom:1px solid #d0d0d0;"></div>
<div class="a" style="left:1116px;top:868px;width:361px;height:21px;border-right:1px solid #d0d0d0;border-bottom:1px solid #d0d0d0;"></div>
<div class="a" style="left:1477px;top:868px;width:81px;height:21px;border-right:1px solid #d0d0d0;border-bottom:1px solid #d0d0d0;"></div>
<div class="a" style="left:1558px;top:868px;width:101px;height:21px;border-right:1px solid #d0d0d0;border-bottom:1px solid #d0d0d0;"></div>
<div class="a" style="left:1659px;top:868px;width:81px;height:21px;border-right:1px solid #d0d0d0;border-bottom:1px solid #d0d0d0;"></div>
<div class="a" style="left:1740px;top:868px;width:121px;height:21px;border-right:1px solid #d0d0d0;border-bottom:1px solid #d0d0d0;"></div>
<div class="t g" style="left:1119px;top:872px;letter-spacing:0.175px;white-space:pre">wall finish: indoor , plastering</div>
<div class="t g" style="left:1035px;top:872px">25</div>
<div class="t g" style="left:1480px;top:872px">m2</div>
<div class="r g" style="left:1558px;top:872px;width:97px;letter-spacing:0.25px">0.000</div>
<div class="vl" style="left:1013px;top:868px;height:20px;background:#dedede"></div>
<div class="hl" style="left:1013px;top:877px;width:18px;background:#dedede"></div>
<div class="a" style="left:987px;top:889px;width:18px;height:21px;border-right:1px solid #d0d0d0;border-bottom:1px solid #d0d0d0;"></div>
<div class="c" style="left:987px;top:893px;width:17px">43</div>
<div class="a" style="left:1005px;top:889px;width:111px;height:21px;border-right:1px solid #d0d0d0;border-bottom:1px solid #d0d0d0;"></div>
<div class="a" style="left:1116px;top:889px;width:361px;height:21px;border-right:1px solid #d0d0d0;border-bottom:1px solid #d0d0d0;"></div>
<div class="a" style="left:1477px;top:889px;width:81px;height:21px;border-right:1px solid #d0d0d0;border-bottom:1px solid #d0d0d0;"></div>
<div class="a" style="left:1558px;top:889px;width:101px;height:21px;border-right:1px solid #d0d0d0;border-bottom:1px solid #d0d0d0;"></div>
<div class="a" style="left:1659px;top:889px;width:81px;height:21px;border-right:1px solid #d0d0d0;border-bottom:1px solid #d0d0d0;"></div>
<div class="a" style="left:1740px;top:889px;width:121px;height:21px;border-right:1px solid #d0d0d0;border-bottom:1px solid #d0d0d0;"></div>
<div class="t g" style="left:1119px;top:893px;letter-spacing:0.099px;white-space:pre">length of skirt</div>
<div class="t g" style="left:1035px;top:893px">26</div>
<div class="t g" style="left:1480px;top:893px">m</div>
<div class="r g" style="left:1558px;top:893px;width:97px;letter-spacing:0.25px">0.000</div>
<div class="vl" style="left:1013px;top:889px;height:10px;background:#dedede"></div>
<div class="hl" style="left:1013px;top:898px;width:18px;background:#dedede"></div>
<div class="a" style="left:987px;top:910px;width:18px;height:21px;border-right:1px solid #d0d0d0;border-bottom:1px solid #d0d0d0;"></div>
<div class="c" style="left:987px;top:914px;width:17px">44</div>
<div class="a" style="left:1005px;top:910px;width:111px;height:21px;border-right:1px solid #d0d0d0;border-bottom:1px solid #d0d0d0;background:#d0e6fd;"></div>
<div class="a" style="left:1116px;top:910px;width:361px;height:21px;border-right:1px solid #d0d0d0;border-bottom:1px solid #d0d0d0;background:#d0e6fd;"></div>
<div class="a" style="left:1477px;top:910px;width:81px;height:21px;border-right:1px solid #d0d0d0;border-bottom:1px solid #d0d0d0;background:#d0e6fd;"></div>
<div class="a" style="left:1558px;top:910px;width:101px;height:21px;border-right:1px solid #d0d0d0;border-bottom:1px solid #d0d0d0;background:#d0e6fd;"></div>
<div class="a" style="left:1659px;top:910px;width:81px;height:21px;border-right:1px solid #d0d0d0;border-bottom:1px solid #d0d0d0;background:#d0e6fd;"></div>
<div class="a" style="left:1740px;top:910px;width:121px;height:21px;border-right:1px solid #d0d0d0;border-bottom:1px solid #d0d0d0;background:#d0e6fd;"></div>
<div class="t grp" style="left:1119px;top:914px;white-space:pre;transform-origin:0 50%;transform:scaleX(0.9267)">RC STAIRCASES</div>
<div class="a" style="left:1006px;top:912px;width:14px;height:14px;background:#fff;border:1px solid #9a9a9a;border-radius:2.5px"></div>
<div class="a" style="left:1009px;top:919px;width:8px;height:1px;background:#000"></div>
<div class="vl" style="left:1013px;top:926px;height:4px;background:#dedede"></div>
<div class="a" style="left:987px;top:931px;width:18px;height:21px;border-right:1px solid #d0d0d0;border-bottom:1px solid #d0d0d0;"></div>
<div class="c" style="left:987px;top:935px;width:17px">45</div>
<div class="a" style="left:1005px;top:931px;width:111px;height:21px;border-right:1px solid #d0d0d0;border-bottom:1px solid #d0d0d0;"></div>
<div class="a" style="left:1116px;top:931px;width:361px;height:21px;border-right:1px solid #d0d0d0;border-bottom:1px solid #d0d0d0;"></div>
<div class="a" style="left:1477px;top:931px;width:81px;height:21px;border-right:1px solid #d0d0d0;border-bottom:1px solid #d0d0d0;"></div>
<div class="a" style="left:1558px;top:931px;width:101px;height:21px;border-right:1px solid #d0d0d0;border-bottom:1px solid #d0d0d0;"></div>
<div class="a" style="left:1659px;top:931px;width:81px;height:21px;border-right:1px solid #d0d0d0;border-bottom:1px solid #d0d0d0;"></div>
<div class="a" style="left:1740px;top:931px;width:121px;height:21px;border-right:1px solid #d0d0d0;border-bottom:1px solid #d0d0d0;"></div>
<div class="t g" style="left:1119px;top:935px;letter-spacing:0.104px;white-space:pre">Stairs: Reinforced concrete; grade 35/20</div>
<div class="t g" style="left:1035px;top:935px">27</div>
<div class="t g" style="left:1480px;top:935px">m3</div>
<div class="r g" style="left:1558px;top:935px;width:97px;letter-spacing:0.25px">0.000</div>
<div class="vl" style="left:1013px;top:931px;height:20px;background:#dedede"></div>
<div class="hl" style="left:1013px;top:940px;width:18px;background:#dedede"></div>
<div class="a" style="left:1115px;top:447px;width:362px;height:22px;border:2px solid #707070"></div>
<svg style="left:1907px;top:230px" width="9" height="4" viewBox="0 0 9 4"><path d="M0 4 L4.5 0 L9 4 Z" fill="#111"/></svg>
<svg style="left:1907.5px;top:945px" width="8.5" height="4" viewBox="0 0 9 4"><path d="M0 0 L4.5 4 L9 0 Z" fill="#111"/></svg>
<div class="a" style="left:1908px;top:410px;width:8px;height:475px;background:#c6c6c6;border-radius:4px"></div>
<div class="vl" style="left:1919px;top:228px;height:725px;background:#d8d8dc"></div>
<div class="hl" style="left:987px;top:952px;width:933px;background:#c9ccd1"></div>
<div class="a" style="left:996px;top:964px;width:14px;height:14px;background:#3a96f5;border-radius:2px"></div>
<svg style="left:996px;top:964px" width="14" height="14" viewBox="0 0 14 14"><path d="M3.2 7.2 L6 10 L11 4.4" fill="none" stroke="#fff" stroke-width="1.6"/></svg>
<div class="a" style="left:1263px;top:964px;width:14px;height:14px;background:#3a96f5;border-radius:2px"></div>
<svg style="left:1263px;top:964px" width="14" height="14" viewBox="0 0 14 14"><path d="M3.2 7.2 L6 10 L11 4.4" fill="none" stroke="#fff" stroke-width="1.6"/></svg>
<div class="t" style="left:1017px;top:964px;letter-spacing:0.119px">Show detail of current item after association</div>
<div class="t" style="left:1284px;top:964px;letter-spacing:0.164px">Hide detail of other items after association</div>
<!-- sec_bottom -->
<div class="a" style="left:0;top:987px;width:1920px;height:28px;background:#f3f3f3;border-top:1px solid #d0d0d0;border-bottom:1px solid #cfcfcf;border-left:1px solid #d0d0d0;border-right:1px solid #d0d0d0"></div>
<div class="a" style="left:174px;top:987px;width:85px;height:25px;background:#fff;border-bottom:2px solid #3a94f6"></div>
<div class="vl" style="left:174px;top:987px;height:23px;background:#d8d8d8"></div>
<div class="vl" style="left:258px;top:987px;height:23px;background:#d8d8d8"></div>
<div class="t" style="left:96px;top:992px;font-size:14px;line-height:18px;color:#2b2b2b">Modeling</div>
<div class="t" style="left:216px;top:990px;font-size:14px;line-height:18px;color:#3a94f6">BQ</div>
<div class="t" style="left:298px;top:992px;font-size:14px;line-height:18px;color:#2b2b2b;letter-spacing:0.2px">Report</div>
<div class="a" style="left:0;top:1015px;width:1920px;height:24px;background:#dfdfe1"></div>
<div class="a" style="left:0;top:1039px;width:1920px;height:1px;background:#fafafa"></div>
<div class="a" style="left:0;top:1040px;width:1920px;height:8px;background:#040409"></div>
<div class="a" style="left:48px;top:1040px;width:344px;height:8px;background:#2d2d2d"></div>
<div class="vl" style="left:1915px;top:1040px;height:8px;background:#8a8a8a"></div>
<div class="t" style="left:1855px;top:1043px;color:#fff;font-size:12px;letter-spacing:-0.4px">10:25 AM</div>
<!-- sec_icons -->
<svg style="left:0;top:0" width="1920" height="1048" viewBox="0 0 1920 1048" font-family="Liberation Sans, sans-serif">
<g><ellipse cx="27" cy="32.5" rx="9" ry="2.6" fill="#d9d9d9" opacity="0.8"/><polygon points="14,20.5 21.5,19 21.5,33 14,30.5" fill="#fff"/><polygon points="25.5,22 31.5,22.5 31.5,29 25.5,32" fill="#fff"/><polygon points="14.2,13.8 20.8,11.8 20.8,18.2 14.2,19.3" fill="#cfe7e2"/><polygon points="11.5,11.7 14,10.9 14,30.6 11.5,29.8" fill="#3cb034"/><polygon points="11.5,11.7 23.5,6.8 23.5,9.6 11.5,14.3" fill="#5acb44"/><polygon points="23.5,6.8 34,12.2 34,14.8 23.5,9.6" fill="#2f9a2c"/><polygon points="24.2,8 26,9 26,19.5 24.2,19.5" fill="#256a24"/><polygon points="12,19 22,18 22,20.6 12,21.6" fill="#3cb034"/><polygon points="24,19.3 34,20 34,22.6 24,22" fill="#3cb034"/><polygon points="31.4,21 34,21 34,30.5 31.4,31.6" fill="#58c943"/><polygon points="25,31.6 34,28.2 34,30.8 25,34.6" fill="#6ad651"/><polygon points="21,7.4 25,7.4 25,34.6 21,33.2" fill="#44b83a"/><polygon points="21,7.4 23,6.6 23,33.9 21,33.2" fill="#5acb44"/></g>
<polygon points="37,38.8 41.3,38.8 41.3,35" fill="#333"/>
<path d="M56.5 5 H65.5 L69 8.8 V17.5 A1.5 1.5 0 0 1 67.5 19 H56.5 A1.5 1.5 0 0 1 55 17.5 V6.5 A1.5 1.5 0 0 1 56.5 5 Z" fill="#3a96f5"/><path d="M64.4 6 V9.4 H68.2" fill="none" stroke="#fff" stroke-width="1"/><circle cx="65.5" cy="15.5" r="3.6" fill="#3a96f5" stroke="#fff" stroke-width="0.9"/><path d="M63.3 15.5 H67.7 M65.5 13.3 V17.7" stroke="#fff" stroke-width="1.2"/>
<path d="M77 6 A1 1 0 0 1 78 5 H83 L84 6 H89.2 A0.8 0.8 0 0 1 90 6.8 V10.2 H82 L78.3 18.2 H77 Z" fill="#3a96f5"/><path d="M82.6 11.2 H93.2 L89.4 19 H78.8 Z" fill="#3a96f5"/>
<path d="M104 5 H112 L109.6 7.6 Q114.2 11 113 15 Q111.8 18.6 107.6 18.9 Q110.6 16.4 110.2 13.6 Q109.8 11.4 107.2 10 L104 13 Z" fill="#3a96f5"/><polygon points="118.8,10 126.2,10 122.5,15" fill="#3a96f5"/>
<path d="M144.9 5 H137.6 L139.8 7.4 Q135.4 10.6 136.2 14.6 Q137 18 140.6 18.9 Q138.4 16.4 138.8 13.8 Q139.2 11.6 141.8 10 L144.9 12.6 Z" fill="#d9d9d9"/><polygon points="151.2,10 157.8,10 154.5,14.5" fill="#d9d9d9"/>
<path d="M166.6 5 H179 V19 H165 V6.6 Z" fill="#3a96f5"/><rect x="168" y="6.2" width="8" height="3.6" fill="#f8f8f8"/><rect x="172.6" y="6.2" width="1.5" height="2" fill="#3a96f5"/><rect x="167" y="12" width="10" height="5.3" fill="#f8f8f8"/>
<rect x="187" y="7.8" width="6" height="1.4" fill="#3a96f5"/><polygon points="187,11.2 193,11.2 190,14.9" fill="#3a96f5"/>
<rect x="1823" y="10" width="12" height="2.2" fill="#3a96f5"/><path d="M1863.6 8 V6.6 H1870.6 V12.4 H1868.4" fill="none" stroke="#3a96f5" stroke-width="1.4"/><rect x="1859.6" y="9.8" width="7.6" height="4.9" fill="none" stroke="#3a96f5" stroke-width="1.4"/><rect x="1859" y="8.8" width="8.8" height="1.4" fill="#3a96f5"/><path d="M1895.6 7.4 L1905.8 14.8 M1905.8 7.4 L1895.6 14.8" stroke="#3a96f5" stroke-width="2.3" fill="none"/>
<circle cx="1820" cy="36" r="7" fill="#3a96f5"/><text x="1820" y="40.3" font-size="11.5" font-weight="bold" fill="#fff" text-anchor="middle">?</text><polygon points="1835,35.2 1840.8,35.2 1837.9,38.8" fill="#9a9a9a"/><path d="M1862.2 30 Q1865.1 32.6 1868 30 L1872.2 32.8 L1870.6 35.6 L1869.2 34.8 V43 H1861 V34.8 L1859.6 35.6 L1858 32.8 Z" fill="#3a96f5"/><rect x="1895.6" y="29.8" width="11.8" height="12.6" fill="none" stroke="#3a96f5" stroke-width="1.3"/><rect x="1895" y="29.2" width="13" height="3.4" fill="#3a96f5"/><path d="M1901.5 41 V35.8 M1898.8 38.4 L1901.5 35.6 L1904.2 38.4" fill="none" stroke="#3a96f5" stroke-width="1.2"/>
<rect x="21.5" y="58.5" width="29" height="29" fill="#fff" stroke="#9c9c9c" stroke-width="1"/><rect x="21" y="58" width="30" height="5" fill="#a7a7a6"/><circle cx="25.5" cy="65.5" r="1.2" fill="#fff" stroke="#3a96f5" stroke-width="0.9"/><path d="M26.9 65.5 H33" stroke="#3a96f5" stroke-width="0.9"/><circle cx="25.5" cy="71.5" r="1.2" fill="#fff" stroke="#3a96f5" stroke-width="0.9"/><path d="M26.9 71.5 H33" stroke="#3a96f5" stroke-width="0.9"/><circle cx="25.5" cy="77.5" r="1.2" fill="#fff" stroke="#8c8c8c" stroke-width="0.9"/><path d="M26.9 77.5 H33" stroke="#8c8c8c" stroke-width="0.9"/><circle cx="25.5" cy="83.5" r="1.2" fill="#fff" stroke="#8c8c8c" stroke-width="0.9"/><path d="M26.9 83.5 H33" stroke="#8c8c8c" stroke-width="0.9"/><path d="M35.2 81 L41.9 85.4 L48.7 81" fill="none" stroke="#8c8c8c" stroke-width="0.9"/><path d="M35.2 77 L41.9 81.5 L48.7 77" fill="none" stroke="#8c8c8c" stroke-width="0.9"/><path d="M35.1 73.5 L41.9 69.2 L48.7 73.5 L41.9 77.8 Z" fill="#fff" stroke="#3a96f5" stroke-width="1.1" stroke-linejoin="round"/>
<path d="M81.5 57.5 H99.3 L105.5 63.7 V84.5 H81.5 Z" fill="#fff"/><path d="M86 84.5 H81.5 V57.5 H99.3 L105.5 63.7 V72" fill="none" stroke="#8f8f8f" stroke-width="1.1"/><path d="M99.3 57.5 V63.7 H105.5" fill="none" stroke="#8f8f8f" stroke-width="1.1"/><rect x="84.2" y="61" width="13.8" height="3.8" fill="#6aa0d5"/><path d="M84.6 64.8 V76 M93.2 64.8 V73 M84.6 68.6 H100 M84.6 72.4 H94" stroke="#8f8f8f" stroke-width="0.9" fill="none"/><path d="M87 66.6 H89.8 M95 66.6 H100.6 M87 70.6 H89.8" stroke="#b9b9b9" stroke-width="0.9"/><path d="M102.6 65 V67.6" stroke="#777" stroke-width="1"/><g stroke="#fff" stroke-width="0.8" stroke-linejoin="round"><path d="M84.6 77.6 L101.4 69 Q103.6 68.6 104.4 70.6 L105.6 72.8 L109.6 70.8 Q112 70.4 113 72.6 Q113.6 74.2 112.6 75.4 L99.8 88.2 Q95.6 90 94 86.6 L93.6 83.6 L90 84.6 Q85 85.6 83.6 81.6 Q83.2 79 84.6 77.6 Z" fill="#43ab35"/></g><ellipse cx="87.2" cy="80.4" rx="2.7" ry="3.9" transform="rotate(-32 87.2 80.4)" fill="#fff" stroke="#43ab35" stroke-width="1"/><ellipse cx="97.4" cy="84.6" rx="2.7" ry="4.1" transform="rotate(-35 97.4 84.6)" fill="#fff" stroke="#43ab35" stroke-width="1"/><path d="M96.8 79 L101 76" stroke="#fff" stroke-width="1"/>
<path d="M172.6 58.7 H187.4 L197.6 68.9 V89.5 H172.6 Z" fill="#fff" stroke="#929292" stroke-width="1.2" stroke-linejoin="miter"/><path d="M187.4 58.7 V68.9 H197.6" fill="none" stroke="#929292" stroke-width="1.2"/><rect x="175.4" y="64.2" width="12" height="4" fill="#9d9d9d"/><rect x="175.4" y="68" width="18.2" height="18.6" fill="#fff" stroke="#9a9a9a" stroke-width="0.9"/><rect x="175.9" y="68.2" width="17.2" height="4.8" fill="#84bef3"/><rect x="175.9" y="77.8" width="17.2" height="3.5" fill="#84bef3"/><path d="M175.4 73.3 H193.6 M175.4 77.6 H193.6 M175.4 81.6 H193.6" stroke="#9a9a9a" stroke-width="0.9"/><path d="M181.4 73.3 V77.6 M188.5 73.3 V77.6 M181.4 81.6 V86.6 M188.5 81.6 V86.6" stroke="#9a9a9a" stroke-width="0.9"/><path d="M181.4 68.2 V73 M188.5 68.2 V73 M181.4 77.8 V81.3 M188.5 77.8 V81.3" stroke="#5c84cf" stroke-width="0.9"/><path d="M177 71.4 H180 M183.2 71.4 H187 M190 71.4 H193 M177 79.6 H180 M183.2 79.6 H187 M190 79.6 H193" stroke="#5a9bdc" stroke-width="0.9"/><path d="M177 75.5 H180 M183.2 75.5 H187 M190 75.5 H193 M177 83.6 H180 M183.2 83.6 H187 M190 83.6 H193" stroke="#c4c4c4" stroke-width="0.9"/>
<path d="M237.5 57.5 H252.49999999999997 L262.4 67.4 V88.4 H237.5 Z" fill="#fafafa" stroke="#8d8d8d" stroke-width="1.2" stroke-linejoin="miter"/><path d="M252.49999999999997 57.5 V67.4 H262.4" fill="#fff" stroke="#8d8d8d" stroke-width="1.2"/><rect x="241" y="63" width="6" height="5.6" fill="#d2e7fb"/><path d="M240.2 65.3 L243.5 68.5 L249.9 62.4" fill="none" stroke="#2b7fd6" stroke-width="1.5"/><rect x="241" y="71" width="6" height="5.6" fill="#d2e7fb"/><path d="M240.2 73.3 L243.5 76.5 L249.9 70.4" fill="none" stroke="#2b7fd6" stroke-width="1.5"/><rect x="241" y="79" width="6" height="5.6" fill="#d2e7fb"/><path d="M240.2 81.3 L243.5 84.5 L249.9 78.4" fill="none" stroke="#2b7fd6" stroke-width="1.5"/><path d="M251 71.5 H260.8" stroke="#888" stroke-width="1"/><path d="M251 73.5 H254" stroke="#999" stroke-width="1"/><path d="M255.4 73.5 H260.8 M251 75.5 H257.8 M259 75.5 H260.8" stroke="#d0d0d0" stroke-width="0.9"/><path d="M251 79.5 H260.8" stroke="#888" stroke-width="1"/><path d="M251 81.5 H254" stroke="#999" stroke-width="1"/><path d="M255.4 81.5 H260.8 M251 83.5 H257.8 M259 83.5 H260.8" stroke="#d0d0d0" stroke-width="0.9"/>
<path d="M289.6 59.6 H301.40000000000003 L306.6 64.8 V82.6 H289.6 Z" fill="#fff" stroke="#9b9b9b" stroke-width="1.1" stroke-linejoin="miter"/><path d="M301.40000000000003 59.6 V64.8 H306.6" fill="#b5b5b5" stroke="#9b9b9b" stroke-width="1.1"/><rect x="291.3" y="61.2" width="8.4" height="2.4" fill="#f6f6f6"/><rect x="291.1" y="64.9" width="13.9" height="15" fill="#3a96f5"/><rect x="292.2" y="68" width="4.6" height="2.8" fill="#a9d1fb"/><rect x="292.2" y="72.1" width="4.6" height="2.8" fill="#a9d1fb"/><rect x="292.2" y="76.1" width="4.6" height="2.8" fill="#a9d1fb"/><rect x="298.1" y="68" width="5.8" height="2.8" fill="#a9d1fb"/><rect x="298.1" y="72.1" width="5.8" height="2.8" fill="#a9d1fb"/><rect x="298.1" y="76.1" width="5.8" height="2.8" fill="#a9d1fb"/><path d="M299.6 77.9 Q306.4 68.2 313.2 77.9 Q306.4 87.6 299.6 77.9 Z" fill="#44ab35" stroke="#fff" stroke-width="0.8"/><circle cx="306.4" cy="77.9" r="2.5" fill="#fff"/><ellipse cx="306.4" cy="77.9" rx="0.8" ry="1.1" fill="#44ab35"/>
<path d="M289.6 95.6 H301.40000000000003 L306.6 100.8 V118.6 H289.6 Z" fill="#fff" stroke="#9b9b9b" stroke-width="1.1" stroke-linejoin="miter"/><path d="M301.40000000000003 95.6 V100.8 H306.6" fill="#b5b5b5" stroke="#9b9b9b" stroke-width="1.1"/><rect x="291.3" y="97.2" width="8.4" height="2.4" fill="#f6f6f6"/><rect x="291.1" y="100.9" width="13.9" height="15" fill="#5c9bd4"/><rect x="292.2" y="104" width="4.6" height="2.8" fill="#d1d5f0"/><rect x="292.2" y="108.1" width="4.6" height="2.8" fill="#d1d5f0"/><rect x="292.2" y="112.1" width="4.6" height="2.8" fill="#d1d5f0"/><rect x="298.1" y="104" width="5.8" height="2.8" fill="#d1d5f0"/><rect x="298.1" y="108.1" width="5.8" height="2.8" fill="#d1d5f0"/><rect x="298.1" y="112.1" width="5.8" height="2.8" fill="#d1d5f0"/><path d="M300.2 113.9 Q306.4 104.6 312.8 113.9 Q306.4 123.2 300.2 113.9 Z" fill="#fff" stroke="#5dc63c" stroke-width="1.2"/>
<path d="M397.6 59.6 H409.40000000000003 L414.6 64.8 V82.6 H397.6 Z" fill="#fff" stroke="#b7b3c7" stroke-width="1.1" stroke-linejoin="miter"/><path d="M409.40000000000003 59.6 V64.8 H414.6" fill="#d5d2de" stroke="#b7b3c7" stroke-width="1.1"/><rect x="399.3" y="61.2" width="8.4" height="2.4" fill="#f6f6f6"/><rect x="399.2" y="65" width="13.6" height="2.6" fill="#b7b3c7"/><path d="M399.6 67.6 V79.6 H405.8 M399.6 71.6 H406.6 M399.6 75.6 H408 M405.8 67.6 V79.6 M412.4 67.6 V72" fill="none" stroke="#a3a3a3" stroke-width="0.9"/><path d="M401.2 69.6 H403.8 M407.2 69.6 H410.8 M401.2 73.6 H403.8 M401.2 77.6 H403.8" stroke="#c9c9c9" stroke-width="0.9"/><path d="M408.6 72.4 L416.6 82.6" stroke="#b7b3c7" stroke-width="1.9"/><path d="M419.6 72.2 Q412 75 407 81.6" fill="none" stroke="#b7b3c7" stroke-width="1.7"/><path d="M410.6 82.7 H414.6" stroke="#b7b3c7" stroke-width="1.1"/>
<path d="M566.8 71.8 V61.4 A1 1 0 0 0 565.8 60.4 H542.2 A1 1 0 0 0 541.2 61.4 V87.5 A1 1 0 0 0 542.2 88.5 H555" fill="#fff" stroke="#8b8b8b" stroke-width="1.1"/><path d="M547.4 64.6 V61.6 H550.4 Q550.6 57.4 554 57.4 Q557.4 57.4 557.6 61.6 H560.6 V64.6 Z" fill="#dedede" stroke="#8b8b8b" stroke-width="1"/><ellipse cx="554" cy="61.3" rx="1.3" ry="1" fill="#fff" stroke="#8b8b8b" stroke-width="0.8"/><path d="M544.6 70.2 L547.8 73 L551.4 67.6" fill="none" stroke="#3a96f5" stroke-width="2.2"/><path d="M550.7 77.6 V76.5 H544.4 L548 79.6 L544.4 82.6 H550.7 V81.4" fill="none" stroke="#e08b2b" stroke-width="1.1"/><path d="M553 70.5 H563 M553 74.5 H557 M553 78.5 H556.8 M553 82.5 H555.8" stroke="#cbcbcb" stroke-width="0.9"/><rect x="557.6" y="74.3" width="11" height="14.2" rx="1.6" fill="#fff" stroke="#8b8b8b" stroke-width="1.1"/><rect x="559.6" y="76.4" width="7" height="3" rx="1.2" fill="#fff" stroke="#8b8b8b" stroke-width="0.9"/><rect x="559.2" y="82" width="1.8" height="1.8" fill="#3fa640"/><rect x="559.2" y="85" width="1.8" height="1.8" fill="#3fa640"/><rect x="562.2" y="82" width="1.8" height="1.8" fill="#3fa640"/><rect x="562.2" y="85" width="1.8" height="1.8" fill="#3fa640"/><rect x="565.2" y="82" width="1.8" height="1.8" fill="#3fa640"/><rect x="565.2" y="85" width="1.8" height="1.8" fill="#3fa640"/>
<path d="M642.6 58.7 H657.1999999999999 L667.4 68.9 V89.3 H642.6 Z" fill="#fff" stroke="#8f8f8f" stroke-width="1.2" stroke-linejoin="miter"/><path d="M657.1999999999999 58.7 V68.9 H667.4" fill="#fff" stroke="#8f8f8f" stroke-width="1.2"/><polygon points="646.5,59.4 656.8,59.4 656.8,69 667,69 667,80 " fill="#ececec" opacity="0.9"/><path d="M642.6 58.7 H657.1999999999999 L667.4 68.9 V89.3 H642.6 Z" fill="none" stroke="#8f8f8f" stroke-width="1.2" stroke-linejoin="miter"/><path d="M657.1999999999999 58.7 V68.9 H667.4" fill="#fff" stroke="#8f8f8f" stroke-width="1.2"/><text x="646.4" y="77" font-size="9.6" font-weight="bold" fill="#1b70c6" letter-spacing="-0.2">BQ</text><path d="M656.2 80.5 H663.8 M656.2 83.5 H663.8 M656.2 86.4 H663.8" stroke="#c9c9c9" stroke-width="0.9"/><path d="M642.6 82.1 H640 A3 3 0 0 0 640 88.1 H642.6" fill="#fff" stroke="#3fa52e" stroke-width="1.9"/><path d="M648 82.1 H651 A3 3 0 0 1 651 88.1 H648" fill="#fff" stroke="#3fa52e" stroke-width="1.9"/><path d="M640.4 85.1 H650.2" stroke="#3fa52e" stroke-width="1.7"/>
<path d="M77.2 996.2 L84 993.2 L90.6 996.2 L84 999.3 Z M76.3 998.7 V1005.7 L82.5 1008.7 V1002 Z M91.5 998.7 V1005.7 L85.5 1008.7 V1002 Z" fill="none" stroke="#3b3b4b" stroke-width="1.2" stroke-linejoin="round"/>
<rect x="208" y="994.2" width="3.4" height="12" rx="1" fill="#fff" stroke="#3a96f5" stroke-width="1.1"/><rect x="196" y="991" width="11.8" height="15.8" rx="1.6" fill="#3a96f5"/><rect x="197.6" y="993" width="3.2" height="1.3" fill="#fff"/><rect x="197.6" y="995" width="7.6" height="1.1" fill="#fff"/><rect x="197.6" y="997" width="7.6" height="1.1" fill="#fff"/><rect x="197.6" y="999" width="7.6" height="1.1" fill="#fff"/><rect x="197.6" y="1001" width="7.6" height="1.1" fill="#fff"/><rect x="202" y="1003.4" width="3.2" height="1.2" fill="#fff"/>
<rect x="282.4" y="994.6" width="11.2" height="13.8" rx="1.6" fill="none" stroke="#3b3b4b" stroke-width="1.2"/><rect x="285" y="993" width="6" height="3" rx="0.8" fill="#f3f3f3" stroke="#3b3b4b" stroke-width="1.1"/><rect x="284.6" y="999.1" width="6.8" height="1.2" fill="#3b3b4b"/><rect x="284.6" y="1001.8" width="6.8" height="1.2" fill="#3b3b4b"/><rect x="284.6" y="1004.8" width="6.8" height="1.2" fill="#3b3b4b"/>
<polygon points="982,566.4 984.8,569.5 982,572.6" fill="#b6b6be"/><polygon points="1033,202.4 1042,202.4 1037.5,208" fill="#555"/><polygon points="195.8,166.2 204.2,166.2 200,171.6" fill="#555"/>
</svg>
<!-- sec_overlay -->
<svg style="left:0;top:0;pointer-events:none" width="1920" height="1048" viewBox="0 0 1920 1048"><polygon points="441,369.3 1079.3,496.3 1080.1,492.4 1095,503 1076.9,508 1077.7,504.1 441,370.6" fill="#f8363a"/><rect x="363.5" y="346.5" width="73" height="23" fill="none" stroke="#f8363a" stroke-width="3"/><rect x="1108.5" y="491" width="102" height="17.5" fill="none" stroke="#f8363a" stroke-width="3"/></svg>
</body></html>
